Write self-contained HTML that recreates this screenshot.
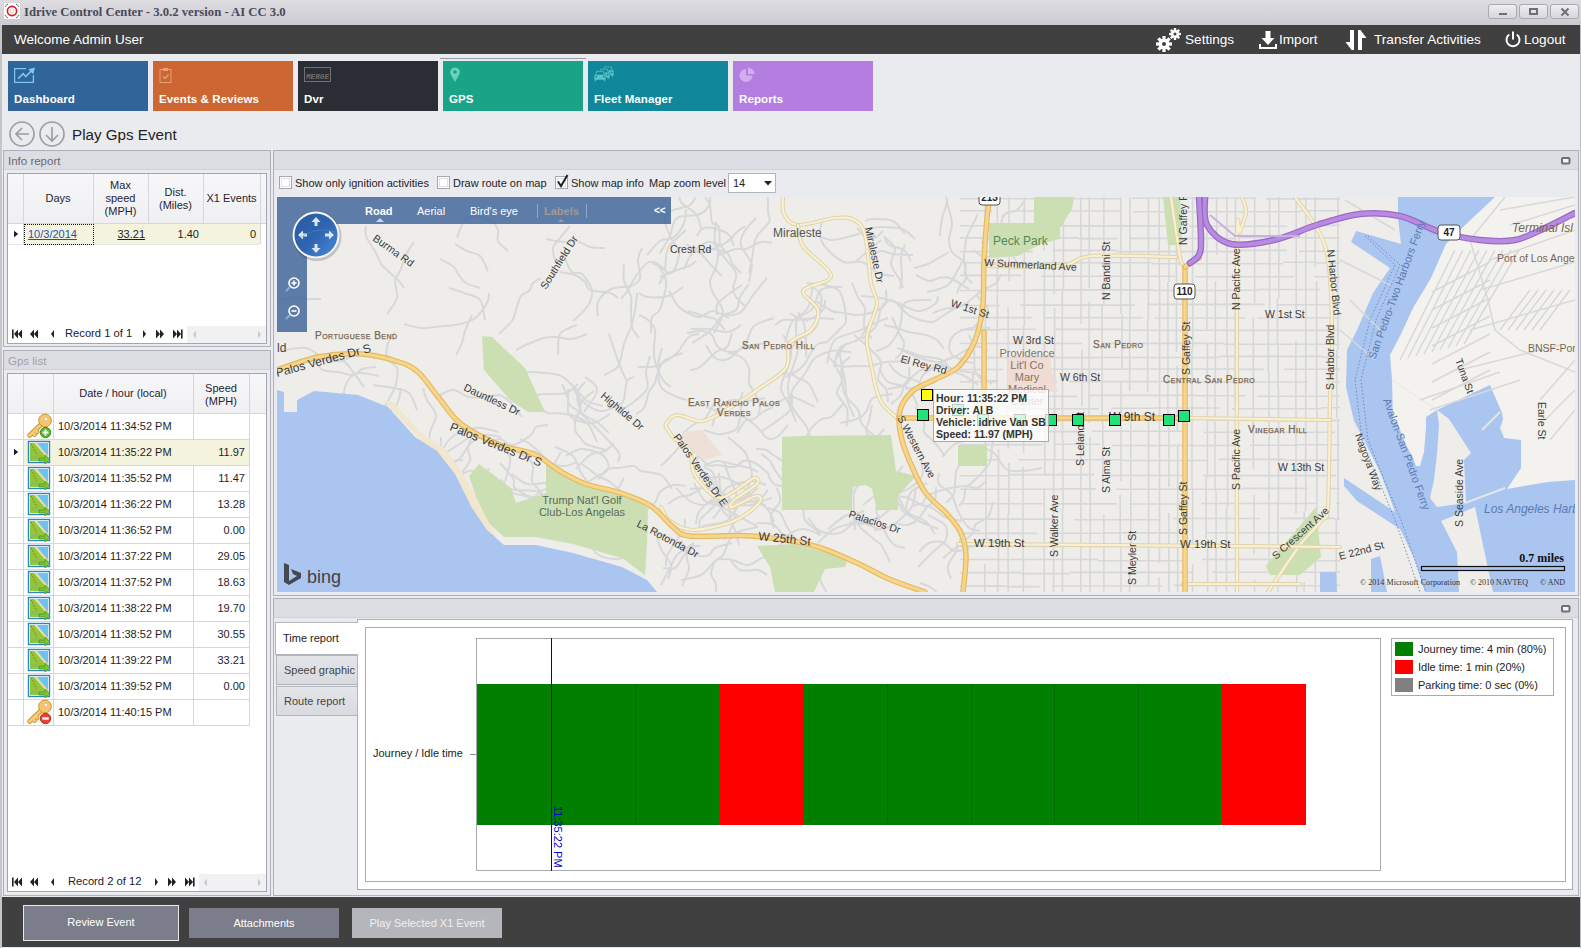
<!DOCTYPE html>
<html><head><meta charset="utf-8">
<style>
*{margin:0;padding:0;box-sizing:border-box}
html,body{width:1581px;height:948px;overflow:hidden;background:#EAEBEF;font-family:"Liberation Sans",sans-serif;position:relative}
.a{position:absolute}
.t{position:absolute;white-space:nowrap}
#title{left:0;top:0;width:1581px;height:25px;background:linear-gradient(#DCDCE1,#CBCBD1)}
#hdr{left:2px;top:25px;width:1578px;height:29px;background:#404040}
.wb{position:absolute;top:4px;width:29px;height:15px;border:1px solid #A9A9B0;border-radius:3px;background:linear-gradient(#EFEFF2,#D6D6DB)}
.tile{position:absolute;top:61px;width:140px;height:50px}
.tile .lb{position:absolute;left:6px;top:32px;font-size:11.5px;font-weight:bold;color:#fff;letter-spacing:0.1px}
.grp{position:absolute;border:1px solid #AEB0BA;background:#EAEBEF}
.gh{position:absolute;left:0;top:0;right:0;height:19px;background:#DCDDE2;border-bottom:1px solid #D0D1D6}
.gh span{position:absolute;left:4px;top:4px;font-size:11.5px;color:#6A6A70}
.grid{position:absolute;background:#fff;border:1px solid #A4A6AF}
.cell{position:absolute;font-size:11px;color:#1E1E1E;white-space:nowrap}
.hl{position:absolute;background:#D7D8DE}
.btn{position:absolute;font-size:11px;color:#fff;text-align:center;background:#7B7E8A}
</style></head><body>

<!-- title bar -->
<div id="title" class="a">
  <svg class="a" style="left:4px;top:3px" width="16" height="16" viewBox="0 0 16 16">
    <rect x="0" y="0" width="16" height="16" fill="#fff"/>
    <circle cx="8" cy="8" r="4.6" fill="none" stroke="#E0141E" stroke-width="1.6"/>
    <circle cx="8" cy="8" r="2" fill="none" stroke="#ccc" stroke-width="0.8"/>
    <path d="M1 4 A8 8 0 0 1 4 1 M12 1 A8 8 0 0 1 15 4 M15 12 A8 8 0 0 1 12 15 M4 15 A8 8 0 0 1 1 12" stroke="#666" stroke-width="1" fill="none"/>
  </svg>
  <div class="t" style="left:24px;top:5px;font-size:12.7px;font-weight:bold;color:#4A4A58;font-family:'Liberation Serif',serif;">Idrive Control Center - 3.0.2 version - AI CC 3.0</div>
  <div class="wb" style="left:1488px"><div class="a" style="left:10px;top:8px;width:8px;height:2px;background:#6E6E7A"></div></div>
  <div class="wb" style="left:1519px"><div class="a" style="left:9px;top:3px;width:9px;height:7px;border:2px solid #6E6E7A"></div></div>
  <div class="wb" style="left:1550px"><svg class="a" style="left:9px;top:2px" width="10" height="10"><path d="M1.5 1.5L8.5 8.5M8.5 1.5L1.5 8.5" stroke="#6E6E7A" stroke-width="2"/></svg></div>
</div>

<!-- window left/right border -->
<div class="a" style="left:0;top:25px;width:2px;height:923px;background:#C5C5CC"></div>
<div class="a" style="left:1580px;top:25px;width:1px;height:923px;background:#BDBDC5"></div>

<!-- header -->
<div id="hdr" class="a">
  <div class="t" style="left:12px;top:7px;font-size:13.5px;color:#fff">Welcome Admin User</div>
  <!-- settings -->
  <svg class="a" style="left:1153px;top:2px" width="28" height="26" viewBox="0 0 28 26">
    <g fill="#fff">
      <circle cx="9" cy="17" r="5.5"/>
      <g transform="translate(9 17)"><rect x="-1.6" y="-8" width="3.2" height="16"/><rect x="-1.6" y="-8" width="3.2" height="16" transform="rotate(45)"/><rect x="-1.6" y="-8" width="3.2" height="16" transform="rotate(90)"/><rect x="-1.6" y="-8" width="3.2" height="16" transform="rotate(135)"/></g>
      <circle cx="20" cy="7" r="4"/>
      <g transform="translate(20 7)"><rect x="-1.2" y="-6" width="2.4" height="12"/><rect x="-1.2" y="-6" width="2.4" height="12" transform="rotate(45)"/><rect x="-1.2" y="-6" width="2.4" height="12" transform="rotate(90)"/><rect x="-1.2" y="-6" width="2.4" height="12" transform="rotate(135)"/></g>
    </g>
    <circle cx="9" cy="17" r="2" fill="#404040"/><circle cx="20" cy="7" r="1.5" fill="#404040"/>
  </svg>
  <div class="t" style="left:1183px;top:7px;font-size:13.6px;color:#fff">Settings</div>
  <!-- import -->
  <svg class="a" style="left:1257px;top:5px" width="18" height="20" viewBox="0 0 18 20">
    <path d="M6.5 1h5v7h4l-6.5 7-6.5-7h4z" fill="#fff"/>
    <path d="M1 14v4h16v-4" stroke="#fff" stroke-width="2" fill="none"/>
  </svg>
  <div class="t" style="left:1277px;top:7px;font-size:13.6px;color:#fff">Import</div>
  <!-- transfer -->
  <svg class="a" style="left:1343px;top:4px" width="24" height="22" viewBox="0 0 24 22">
    <path d="M9 1v20h-2.5l-6-8h4.5v-12z" fill="#fff"/>
    <path d="M13 21v-20h2.5l6 8h-4.5v12z" fill="#fff"/>
  </svg>
  <div class="t" style="left:1372px;top:7px;font-size:13.6px;color:#fff">Transfer Activities</div>
  <!-- logout -->
  <svg class="a" style="left:1502px;top:6px" width="18" height="18" viewBox="0 0 18 18">
    <path d="M5.2 3.5A6.5 6.5 0 1 0 12.8 3.5" stroke="#fff" stroke-width="2" fill="none"/>
    <path d="M9 0.5v8" stroke="#fff" stroke-width="2"/>
  </svg>
  <div class="t" style="left:1522px;top:7px;font-size:13.6px;color:#fff">Logout</div>
</div>

<!-- tiles -->
<div class="tile" style="left:8px;background:#316599">
  <svg class="a" style="left:6px;top:6px" width="22" height="17" viewBox="0 0 22 17"><path d="M0.6 1.6H12M0.6 1V15.4H19.4V8" stroke="#7CC7F0" stroke-width="1.3" fill="none"/><path d="M4.2 11.6L9.2 6.6L11.7 9.6L17.2 4.1" stroke="#7CC7F0" stroke-width="1.5" fill="none"/><path d="M21 0.5L14.3 2.2L19.3 7.2Z" fill="#7CC7F0"/></svg>
  <div class="lb">Dashboard</div>
</div>
<div class="tile" style="left:153px;background:#CC6633">
  <svg class="a" style="left:6px;top:6px" width="14" height="17" viewBox="0 0 14 17"><rect x="1" y="2.5" width="11" height="13" stroke="#E8A27A" stroke-width="1" fill="none"/><rect x="4" y="1" width="5" height="3" fill="#E8A27A"/><path d="M4 9.5l2 2 3.5-4" stroke="#E8A27A" stroke-width="1.2" fill="none"/></svg>
  <div class="lb">Events &amp; Reviews</div>
</div>
<div class="tile" style="left:298px;background:#2A2D33">
  <svg class="a" style="left:6px;top:6px" width="28" height="16" viewBox="0 0 28 16"><rect x="0.5" y="0.5" width="26" height="14" fill="none" stroke="#707070" stroke-width="1"/><text x="2" y="11.5" font-size="7" font-weight="bold" font-style="italic" fill="#6E6E6E" textLength="23" lengthAdjust="spacingAndGlyphs" font-family="Liberation Mono">MERGE</text></svg>
  <div class="lb">Dvr</div>
</div>
<div class="a" style="left:440px;top:58px;width:146px;height:1px;background:#9A9AA2"></div>
<div class="tile" style="left:443px;background:#1AA386">
  <svg class="a" style="left:6px;top:6px" width="12" height="16" viewBox="0 0 12 16"><path d="M6 15L1.5 7A4.8 4.8 0 1 1 10.5 7z" fill="#6CD1BB"/><circle cx="6" cy="5" r="1.8" fill="#1AA386"/></svg>
  <div class="lb">GPS</div>
</div>
<div class="tile" style="left:588px;background:#10879B">
  <svg class="a" style="left:5px;top:5px" width="22" height="16" viewBox="0 0 22 16"><g transform="translate(9 0)"><path d="M2.3 0.3H9.7L11.2 4.6H12V9.2H11.6V10.8H9.4V9.6H2.6V10.8H0.4V9.2H0V4.6H0.8Z" fill="#5BC4C8" stroke="#10879B" stroke-width="0.6"/><path d="M3 1.3H9L10 4.3H2Z" fill="#10879B"/><circle cx="2.2" cy="6.3" r="0.9" fill="#10879B"/><circle cx="9.8" cy="6.3" r="0.9" fill="#10879B"/></g><g transform="translate(5 2.2)"><path d="M2.3 0.3H9.7L11.2 4.6H12V9.2H11.6V10.8H9.4V9.6H2.6V10.8H0.4V9.2H0V4.6H0.8Z" fill="#5BC4C8" stroke="#10879B" stroke-width="0.6"/><path d="M3 1.3H9L10 4.3H2Z" fill="#10879B"/><circle cx="2.2" cy="6.3" r="0.9" fill="#10879B"/><circle cx="9.8" cy="6.3" r="0.9" fill="#10879B"/></g><g transform="translate(1 4.4)"><path d="M2.3 0.3H9.7L11.2 4.6H12V9.2H11.6V10.8H9.4V9.6H2.6V10.8H0.4V9.2H0V4.6H0.8Z" fill="#5BC4C8" stroke="#10879B" stroke-width="0.6"/><path d="M3 1.3H9L10 4.3H2Z" fill="#10879B"/><circle cx="2.2" cy="6.3" r="0.9" fill="#10879B"/><circle cx="9.8" cy="6.3" r="0.9" fill="#10879B"/></g></svg>
  <div class="lb">Fleet Manager</div>
</div>
<div class="tile" style="left:733px;background:#B47EE0">
  <svg class="a" style="left:6px;top:6px" width="16" height="16" viewBox="0 0 16 16"><path d="M7 2A6.5 6.5 0 1 0 13.5 8.5H7z" fill="#D0AEF0"/><path d="M9 0.5V7h6.5A6.5 6.5 0 0 0 9 0.5z" fill="#D0AEF0"/></svg>
  <div class="lb">Reports</div>
</div>

<!-- nav -->
<svg class="a" style="left:8px;top:120px" width="60" height="29" viewBox="0 0 60 29">
  <circle cx="14" cy="14" r="12" stroke="#9C9C9C" stroke-width="1.6" fill="none"/>
  <path d="M8 14h13M14 8l-6 6 6 6" stroke="#9C9C9C" stroke-width="1.6" fill="none"/>
  <circle cx="44" cy="14" r="12" stroke="#9C9C9C" stroke-width="1.6" fill="none"/>
  <path d="M44 7v14M38 15l6 6 6-6" stroke="#9C9C9C" stroke-width="1.6" fill="none"/>
</svg>
<div class="t" style="left:72px;top:126px;font-size:15.2px;color:#222">Play Gps Event</div>

<!-- LEFT: info report -->
<div class="grp" style="left:3px;top:150px;width:268px;height:197px">
  <div class="gh"><span>Info report</span></div>
</div>
<div class="grid" style="left:7px;top:173px;width:260px;height:171px"></div>

<!-- LEFT: gps list -->
<div class="grp" style="left:3px;top:350px;width:268px;height:546px">
  <div class="gh"><span style="color:#A0A0A8">Gps list</span></div>
</div>
<div class="grid" style="left:7px;top:373px;width:260px;height:519px"></div>

<!-- MAP panel -->
<div class="grp" style="left:273px;top:150px;width:1306px;height:446px">
  <div class="gh"></div>
</div>

<!-- CHART panel -->
<div class="grp" style="left:273px;top:598px;width:1306px;height:298px">
  <div class="gh"></div>
</div>

<!-- bottom bar -->
<div class="a" style="left:2px;top:897px;width:1578px;height:50px;background:#404040"></div>
<div class="btn" style="left:23px;top:905px;width:156px;height:36px;border:1px solid #E8E8E8;padding-top:1px"><div class="a" style="left:2px;top:2px;right:2px;bottom:2px;background:#7B7E8A"></div><span class="a" style="left:0;right:0;top:10px">Review Event</span></div>
<div class="btn" style="left:189px;top:908px;width:150px;height:30px;line-height:30px">Attachments</div>
<div class="btn" style="left:352px;top:908px;width:150px;height:30px;line-height:30px;background:#B5B6BC;color:#F0F0F0">Play Selected X1 Event</div>

<svg width="0" height="0" style="position:absolute"><defs>
<symbol id="ikey" viewBox="0 0 30 26">
 <path d="M18.5 11L6.5 22.5M9.5 19.5l2.2 2.2M12.2 17l2 2" stroke="#C98E35" stroke-width="4.6" stroke-linecap="round" fill="none"/>
 <path d="M18.5 11L6.5 22.5M9.5 19.5l2.2 2.2M12.2 17l2 2" stroke="#F6CB74" stroke-width="3" stroke-linecap="round" fill="none"/>
 <circle cx="22" cy="7.5" r="6.4" fill="#F3C56C" stroke="#CF953F" stroke-width="1"/>
 <circle cx="23" cy="6" r="1.5" fill="#fff" stroke="#C99" stroke-width="0.4"/>
</symbol>
<symbol id="iplus" viewBox="0 0 30 26">
 <circle cx="22.5" cy="19.5" r="5.2" fill="#5CB52F" stroke="#3C8C1B" stroke-width="1"/>
 <path d="M22.5 16.5v6M19.5 19.5h6" stroke="#fff" stroke-width="2"/>
</symbol>
<symbol id="iminus" viewBox="0 0 30 26">
 <circle cx="22.5" cy="19.5" r="5.2" fill="#E5423A" stroke="#B82820" stroke-width="1"/>
 <path d="M19.3 19.5h6.4" stroke="#fff" stroke-width="2.2"/>
</symbol>
<symbol id="imap" viewBox="0 0 30 26">
 <rect x="5.5" y="2.5" width="21" height="21" fill="#fff" stroke="#2A87C6" stroke-width="1.4"/>
 <rect x="7" y="4" width="18" height="18" fill="#8BCB3A"/>
 <path d="M12 4h13v13z" fill="#6CC3F0"/>
 <path d="M11 4h3l11 13v3z" fill="#F2D9A6"/>
 <path d="M8 5l2 3 1 3 2 3 1 2" stroke="#E0402A" stroke-width="1" stroke-dasharray="1.5 1.5" fill="none"/>
 <path d="M7 21l5-4 4 3" stroke="#999" stroke-width="0.8" fill="none"/>
 <path d="M16 19h6v-3l5 4.5-5 4.5v-3h-6z" fill="#7CC232" stroke="#4F9A1C" stroke-width="0.8"/>
</symbol>
<symbol id="tri" viewBox="0 0 6 8"><path d="M0 0L5 4L0 8z" fill="#1A1A2A"/></symbol>
</defs></svg>
<div class="a" style="left:8px;top:174px;width:258px;height:49px;background:linear-gradient(#F7F7F9,#F0F0F3)"></div>
<div class="a" style="left:23px;top:174px;width:1px;height:70px;background:#D6D7DD"></div>
<div class="a" style="left:93px;top:174px;width:1px;height:70px;background:#D6D7DD"></div>
<div class="a" style="left:148px;top:174px;width:1px;height:70px;background:#D6D7DD"></div>
<div class="a" style="left:203px;top:174px;width:1px;height:70px;background:#D6D7DD"></div>
<div class="a" style="left:260px;top:174px;width:1px;height:70px;background:#D6D7DD"></div>
<div class="a" style="left:8px;top:223px;width:258px;height:1px;background:#D6D7DD"></div>
<div class="a" style="left:24px;top:224px;width:236px;height:20px;background:#F4F3DD"></div>
<div class="a" style="left:8px;top:244px;width:252px;height:1px;background:#E4E5EA"></div>
<div class="a" style="left:24px;top:224px;width:70px;height:21px;border:1px dotted #111"></div>
<svg class="a" style="left:14px;top:230px" width="5" height="8"><use href="#tri"/></svg>
<div class="cell" style="left:23px;top:192px;width:70px;text-align:center;line-height:12.8px;color:#252530">Days</div>
<div class="cell" style="left:93px;top:179px;width:55px;text-align:center;line-height:12.8px;color:#252530">Max<br>speed<br>(MPH)</div>
<div class="cell" style="left:148px;top:186px;width:55px;text-align:center;line-height:12.8px;color:#252530">Dist.<br>(Miles)</div>
<div class="cell" style="left:203px;top:192px;width:57px;text-align:center;line-height:12.8px;color:#252530">X1 Events</div>
<div class="cell" style="left:28px;top:228px;color:#1F4FB8;text-decoration:underline">10/3/2014</div>
<div class="cell" style="left:93px;top:228px;width:52px;text-align:right;text-decoration:underline">33.21</div>
<div class="cell" style="left:148px;top:228px;width:51px;text-align:right">1.40</div>
<div class="cell" style="left:203px;top:228px;width:53px;text-align:right">0</div>
<svg class="a" style="left:12px;top:329px" width="190" height="10" viewBox="0 0 190 10"><rect x="0" y="0.5" width="1.6" height="9" fill="#222"/><path d="M6 0.5L2 5L6 9.5zM10 0.5L6 5L10 9.5z" fill="#222"/><path d="M22 0.5L18 5L22 9.5zM26 0.5L22 5L26 9.5z" fill="#222"/><path d="M42 1L39 5L42 9z" fill="#222"/><path d="M131.0 1L134 5L131 9z" fill="#222"/><path d="M144 0.5L148 5L144 9.5zM148 0.5L152 5L148 9.5z" fill="#222"/><path d="M161 0.5L165 5L161 9.5zM165 0.5L169 5L165 9.5z" fill="#222"/><rect x="169" y="0.5" width="1.6" height="9" fill="#222"/></svg>
<div class="cell" style="left:65px;top:327px;font-size:11.2px;color:#202030">Record 1 of 1</div>
<div class="a" style="left:187px;top:326px;width:79px;height:17px;background:#F1F1F3"></div>
<svg class="a" style="left:192px;top:330px" width="72" height="9"><path d="M4 0.5L1 4.5L4 8.5z" fill="#C8C8CE"/><path d="M66 0.5L69 4.5L66 8.5z" fill="#C8C8CE"/></svg>
<div class="a" style="left:8px;top:374px;width:258px;height:40px;background:linear-gradient(#F7F7F9,#F0F0F3)"></div>
<div class="a" style="left:23px;top:374px;width:1px;height:352px;background:#D6D7DD"></div>
<div class="a" style="left:53px;top:374px;width:1px;height:352px;background:#D6D7DD"></div>
<div class="a" style="left:193px;top:374px;width:1px;height:352px;background:#D6D7DD"></div>
<div class="a" style="left:249px;top:374px;width:1px;height:352px;background:#D6D7DD"></div>
<div class="a" style="left:8px;top:413px;width:258px;height:1px;background:#D6D7DD"></div>
<div class="cell" style="left:53px;top:387px;width:140px;text-align:center;line-height:12.8px;color:#252530">Date / hour (local)</div>
<div class="cell" style="left:193px;top:382px;width:56px;text-align:center;line-height:12.8px;color:#252530">Speed<br>(MPH)</div>
<div class="a" style="left:8px;top:439px;width:242px;height:1px;background:#D6D7DD"></div>
<svg class="a" style="left:23px;top:413px" width="30" height="26"><use href="#ikey"/><use href="#iplus"/></svg>
<div class="cell" style="left:58px;top:420px;">10/3/2014 11:34:52 PM</div>
<div class="a" style="left:24px;top:440px;width:225px;height:25px;background:#F4F3DD"></div>
<svg class="a" style="left:14px;top:448px" width="5" height="8"><use href="#tri"/></svg>
<div class="a" style="left:8px;top:465px;width:242px;height:1px;background:#D6D7DD"></div>
<svg class="a" style="left:23px;top:439px" width="30" height="26"><use href="#imap"/></svg>
<div class="cell" style="left:58px;top:446px;">10/3/2014 11:35:22 PM</div>
<div class="cell" style="left:193px;top:446px;width:52px;text-align:right">11.97</div>
<div class="a" style="left:8px;top:491px;width:242px;height:1px;background:#D6D7DD"></div>
<svg class="a" style="left:23px;top:465px" width="30" height="26"><use href="#imap"/></svg>
<div class="cell" style="left:58px;top:472px;">10/3/2014 11:35:52 PM</div>
<div class="cell" style="left:193px;top:472px;width:52px;text-align:right">11.47</div>
<div class="a" style="left:8px;top:517px;width:242px;height:1px;background:#D6D7DD"></div>
<svg class="a" style="left:23px;top:491px" width="30" height="26"><use href="#imap"/></svg>
<div class="cell" style="left:58px;top:498px;">10/3/2014 11:36:22 PM</div>
<div class="cell" style="left:193px;top:498px;width:52px;text-align:right">13.28</div>
<div class="a" style="left:8px;top:543px;width:242px;height:1px;background:#D6D7DD"></div>
<svg class="a" style="left:23px;top:517px" width="30" height="26"><use href="#imap"/></svg>
<div class="cell" style="left:58px;top:524px;">10/3/2014 11:36:52 PM</div>
<div class="cell" style="left:193px;top:524px;width:52px;text-align:right">0.00</div>
<div class="a" style="left:8px;top:569px;width:242px;height:1px;background:#D6D7DD"></div>
<svg class="a" style="left:23px;top:543px" width="30" height="26"><use href="#imap"/></svg>
<div class="cell" style="left:58px;top:550px;">10/3/2014 11:37:22 PM</div>
<div class="cell" style="left:193px;top:550px;width:52px;text-align:right">29.05</div>
<div class="a" style="left:8px;top:595px;width:242px;height:1px;background:#D6D7DD"></div>
<svg class="a" style="left:23px;top:569px" width="30" height="26"><use href="#imap"/></svg>
<div class="cell" style="left:58px;top:576px;">10/3/2014 11:37:52 PM</div>
<div class="cell" style="left:193px;top:576px;width:52px;text-align:right">18.63</div>
<div class="a" style="left:8px;top:621px;width:242px;height:1px;background:#D6D7DD"></div>
<svg class="a" style="left:23px;top:595px" width="30" height="26"><use href="#imap"/></svg>
<div class="cell" style="left:58px;top:602px;">10/3/2014 11:38:22 PM</div>
<div class="cell" style="left:193px;top:602px;width:52px;text-align:right">19.70</div>
<div class="a" style="left:8px;top:647px;width:242px;height:1px;background:#D6D7DD"></div>
<svg class="a" style="left:23px;top:621px" width="30" height="26"><use href="#imap"/></svg>
<div class="cell" style="left:58px;top:628px;">10/3/2014 11:38:52 PM</div>
<div class="cell" style="left:193px;top:628px;width:52px;text-align:right">30.55</div>
<div class="a" style="left:8px;top:673px;width:242px;height:1px;background:#D6D7DD"></div>
<svg class="a" style="left:23px;top:647px" width="30" height="26"><use href="#imap"/></svg>
<div class="cell" style="left:58px;top:654px;">10/3/2014 11:39:22 PM</div>
<div class="cell" style="left:193px;top:654px;width:52px;text-align:right">33.21</div>
<div class="a" style="left:8px;top:699px;width:242px;height:1px;background:#D6D7DD"></div>
<svg class="a" style="left:23px;top:673px" width="30" height="26"><use href="#imap"/></svg>
<div class="cell" style="left:58px;top:680px;">10/3/2014 11:39:52 PM</div>
<div class="cell" style="left:193px;top:680px;width:52px;text-align:right">0.00</div>
<div class="a" style="left:8px;top:725px;width:242px;height:1px;background:#D6D7DD"></div>
<svg class="a" style="left:23px;top:699px" width="30" height="26"><use href="#ikey"/><use href="#iminus"/></svg>
<div class="cell" style="left:58px;top:706px;">10/3/2014 11:40:15 PM</div>
<svg class="a" style="left:12px;top:877px" width="190" height="10" viewBox="0 0 190 10"><rect x="0" y="0.5" width="1.6" height="9" fill="#222"/><path d="M6 0.5L2 5L6 9.5zM10 0.5L6 5L10 9.5z" fill="#222"/><path d="M22 0.5L18 5L22 9.5zM26 0.5L22 5L26 9.5z" fill="#222"/><path d="M42 1L39 5L42 9z" fill="#222"/><path d="M143.0 1L146 5L143 9z" fill="#222"/><path d="M156 0.5L160 5L156 9.5zM160 0.5L164 5L160 9.5z" fill="#222"/><path d="M173 0.5L177 5L173 9.5zM177 0.5L181 5L177 9.5z" fill="#222"/><rect x="181" y="0.5" width="1.6" height="9" fill="#222"/></svg>
<div class="cell" style="left:68px;top:875px;font-size:11.2px;color:#202030">Record 2 of 12</div>
<div class="a" style="left:199px;top:874px;width:67px;height:17px;background:#F1F1F3"></div>
<svg class="a" style="left:203px;top:878px" width="60" height="9"><path d="M4 0.5L1 4.5L4 8.5z" fill="#C8C8CE"/><path d="M55 0.5L58 4.5L55 8.5z" fill="#C8C8CE"/></svg><svg class="a" style="left:1561px;top:157px" width="10" height="8"><rect x="1" y="1" width="7.5" height="5.5" rx="1" fill="#F4F4F6" stroke="#6E6E78" stroke-width="2"/></svg>
<div class="a" style="left:279px;top:176px;width:13px;height:13px;border:1px solid #A8A8B0;background:#fff"><div class="a" style="left:1px;top:1px;width:9px;height:9px;border:1px solid #E2E2E6"></div></div>
<div class="a" style="left:437px;top:176px;width:13px;height:13px;border:1px solid #A8A8B0;background:#fff"><div class="a" style="left:1px;top:1px;width:9px;height:9px;border:1px solid #E2E2E6"></div></div>
<div class="a" style="left:555px;top:176px;width:13px;height:13px;border:1px solid #A8A8B0;background:#fff"><div class="a" style="left:1px;top:1px;width:9px;height:9px;border:1px solid #E2E2E6"></div></div>
<svg class="a" style="left:556px;top:174px" width="13" height="14"><path d="M2 7.5l3 4.5L11.5 1" stroke="#222" stroke-width="2" fill="none"/></svg>
<div class="t" style="left:295px;top:177px;font-size:11px;color:#1E1E2A">Show only ignition activities</div>
<div class="t" style="left:453px;top:177px;font-size:11px;color:#1E1E2A">Draw route on map</div>
<div class="t" style="left:571px;top:177px;font-size:11px;color:#1E1E2A">Show map info</div>
<div class="t" style="left:649px;top:177px;font-size:11px;color:#1E1E2A">Map zoom level</div>
<div class="a" style="left:728px;top:173px;width:48px;height:20px;border:1px solid #B4B4BC;background:#fff"><span class="t" style="left:4px;top:3px;font-size:11px;color:#1E1E2A">14</span><svg class="a" style="left:35px;top:7px" width="8" height="5"><path d="M0 0h8L4 4.5z" fill="#222"/></svg></div>
<svg class="a" style="left:277px;top:197px" width="1298" height="395" viewBox="277 197 1298 395">
<rect x="277" y="197" width="1298" height="395" fill="#EEEDE9"/>
<path d="M985.1 197V310 M985.5 310V462 M986.0 462V538 M984.8 564V619 M997.3 197V333 M997.1 333V435 M998.5 449V574 M997.7 574V687 M1009.0 197V281 M1008.1 307V449 M1008.9 463V514 M1008.1 514V639 M1024.3 197V326 M1023.6 326V453 M1023.0 467V556 M1023.3 556V655 M1044.1 197V251 M1044.3 265V403 M1044.8 403V474 M1044.2 488V639 M1054.1 197V294 M1054.6 308V461 M1053.6 461V611 M1063.4 197V290 M1062.3 290V378 M1062.5 378V440 M1063.0 440V509 M1062.5 509V624 M1080.8 197V237 M1081.1 237V324 M1081.9 350V406 M1080.9 432V555 M1080.8 555V706 M1089.2 197V288 M1089.1 302V423 M1089.9 437V485 M1090.2 485V539 M1090.1 539V592 M1103.9 197V305 M1102.1 305V423 M1102.8 423V489 M1103.9 515V636 M1120.9 197V314 M1122.0 314V368 M1121.0 382V481 M1120.2 495V545 M1121.0 545V628 M1130.0 197V325 M1129.7 325V391 M1130.8 417V545 M1129.6 571V708 M1148.4 197V319 M1147.7 319V392 M1148.5 418V479 M1148.6 479V587 M1159.2 197V279 M1159.6 279V419 M1159.5 419V563 M1159.0 577V646 M1169.0 197V282 M1167.9 282V423 M1168.9 423V487 M1168.9 513V610 M1176.4 197V283 M1176.4 283V352 M1177.2 366V432 M1177.7 446V601 M1192.6 197V298 M1192.8 298V348 M1192.0 348V488 M1192.6 488V550 M1192.6 564V646 M1206.9 197V329 M1207.4 343V478 M1206.1 478V539 M1207.6 539V654 M1216.7 197V255 M1215.3 281V381 M1215.0 381V491 M1216.1 491V633 M1226.9 197V356 M1227.7 356V507 M1226.5 507V574 M1226.5 574V651 M1235.5 197V312 M1235.1 312V405 M1236.8 405V539 M1236.6 539V663 M1254.7 197V303 M1253.3 317V469 M1254.0 495V554 M1254.6 580V731 M1269.6 197V314 M1268.3 314V373 M1269.1 373V492 M1269.1 492V573 M1278.8 197V298 M1277.4 298V345 M1278.0 345V390 M1278.5 390V501 M1277.9 501V657 M1296.2 197V315 M1295.9 341V406 M1296.0 406V514 M1296.8 528V599 M1305.8 197V357 M1305.7 357V511 M1304.2 511V568 M1304.1 582V678 M1315.1 197V267 M1316.6 281V406 M1316.9 406V560 M1315.3 560V682 M1337.9 197V350 M1336.8 350V418 M1338.0 418V520 M1336.3 520V666 M960 198.8H1045 M1065 198.7H1120 M1132 198.3H1254 M1266 198.9H1340 M960 210.8H992 M1012 211.0H1121 M1133 211.7H1171 M1171 211.7H1301 M1301 210.7H1340 M960 225.7H995 M995 226.5H1041 M1061 225.9H1177 M1189 226.3H1287 M1307 225.4H1340 M960 237.9H1078 M1078 238.6H1117 M1129 238.4H1240 M1240 237.4H1280 M1280 237.9H1340 M960 251.6H1033 M1053 250.4H1117 M1117 251.6H1237 M1237 250.4H1287 M1299 251.2H1340 M960 262.7H1057 M1057 262.7H1151 M1151 263.7H1283 M1283 262.3H1317 M1317 263.0H1340 M960 275.4H1021 M1041 276.2H1175 M1195 276.7H1294 M1314 276.7H1340 M960 290.5H1033 M1033 289.9H1153 M1153 290.5H1227 M1227 290.2H1258 M1258 289.5H1320 M960 305.5H1000 M1020 305.1H1135 M1147 304.4H1265 M1277 304.7H1330 M1330 304.8H1340 M960 317.6H1032 M1044 317.8H1113 M1113 317.8H1143 M1155 318.0H1245 M1257 318.0H1312 M1312 317.7H1340 M960 329.9H1001 M1001 329.3H1036 M1056 329.4H1124 M1124 330.2H1221 M1221 330.4H1340 M960 343.5H1082 M1102 343.4H1224 M1224 344.3H1340 M960 357.6H1093 M1093 357.5H1219 M1219 356.4H1323 M1323 357.2H1340 M960 369.5H1003 M1023 369.2H1124 M1124 369.0H1234 M1234 369.4H1264 M1284 369.2H1340 M960 381.7H998 M1018 381.6H1057 M1069 381.6H1195 M1195 382.0H1308 M1328 382.0H1340 M960 396.4H1077 M1089 395.4H1197 M1197 395.7H1245 M1257 396.2H1340 M960 408.0H1007 M1007 408.7H1099 M1111 408.2H1153 M1153 408.0H1220 M1232 408.7H1321 M1321 407.7H1340 M960 419.3H1000 M1020 420.4H1108 M1108 419.8H1195 M1207 420.1H1263 M1263 420.6H1311 M1323 420.5H1340 M960 431.6H1080 M1092 431.3H1184 M1204 432.3H1234 M1254 432.3H1335 M960 444.8H1043 M1055 444.3H1100 M1112 445.5H1238 M1250 445.3H1295 M1295 444.7H1340 M960 459.8H998 M1018 459.8H1123 M1123 460.5H1207 M1219 459.4H1284 M1284 460.2H1340 M960 475.7H1009 M1009 474.6H1094 M1106 475.5H1183 M1203 475.6H1336 M960 489.3H1060 M1060 488.9H1096 M1116 489.2H1242 M1242 488.4H1308 M1328 488.5H1340 M960 503.7H1043 M1055 503.9H1117 M1129 504.0H1189 M1201 503.5H1316 M1336 503.4H1340 M960 519.1H1054 M1074 519.7H1161 M1173 518.5H1260 M1280 518.4H1334 M1334 518.7H1340 M960 533.4H1037 M1049 533.3H1104 M1104 532.9H1186 M1206 532.8H1303 M1303 533.0H1340 M960 546.5H1063 M1075 546.4H1169 M1169 546.9H1230 M1250 547.6H1337 M960 559.5H1098 M1098 560.7H1182 M1202 559.4H1294 M1294 560.7H1340 M960 572.6H1021 M1021 573.6H1070 M1070 572.4H1192 M1212 572.3H1340 M960 586.1H1006 M1006 586.6H1040 M1052 586.0H1162 M1174 585.4H1259 M1259 585.8H1327 M1327 585.3H1340" stroke="#D7D7D9" stroke-width="1.6" fill="none"/>
<path d="M690 370 C691.7 369.5 695.7 370.0 700 367 C704.3 364.0 711.5 355.3 716 352 C720.5 348.7 724.3 350.2 727 347 C729.7 343.8 731.2 335.3 732 333 M850 357 C848.7 358.3 843.3 361.5 842 365 C840.7 368.5 841.5 373.0 842 378 C842.5 383.0 842.3 389.7 845 395 C847.7 400.3 855.2 405.2 858 410 C860.8 414.8 858.7 419.2 862 424 C865.3 428.8 875.3 436.5 878 439 M694 483 C695.8 486.0 700.7 497.2 705 501 C709.3 504.8 714.5 503.5 720 506 C725.5 508.5 731.8 512.7 738 516 C744.2 519.3 753.8 524.3 757 526 M584 412 C586.0 409.0 594.2 398.5 596 394 C597.8 389.5 596.8 387.8 595 385 C593.2 382.2 586.7 378.3 585 377 M946 503 C947.3 501.3 952.3 498.2 954 493 C955.7 487.8 955.0 476.7 956 472 C957.0 467.3 959.3 466.2 960 465 M846 344 C845.0 345.3 840.8 349.2 840 352 C839.2 354.8 840.2 356.2 841 361 C841.8 365.8 844.0 374.7 845 381 C846.0 387.3 845.5 393.0 847 399 C848.5 405.0 852.8 414.0 854 417 M693 478 C695.5 478.0 703.3 478.2 708 478 C712.7 477.8 716.5 476.3 721 477 C725.5 477.7 731.2 480.2 735 482 C738.8 483.8 740.8 485.3 744 488 C747.2 490.7 750.3 495.0 754 498 C757.7 501.0 764.0 504.7 766 506 M905 245 C904.3 246.8 901.5 250.5 901 256 C900.5 261.5 902.2 272.5 902 278 C901.8 283.5 900.3 287.2 900 289 M868 325 C866.5 327.3 863.7 335.2 859 339 C854.3 342.8 844.2 343.3 840 348 C835.8 352.7 835.0 363.8 834 367 M606 450 C602.7 449.0 590.3 446.2 586 444 C581.7 441.8 581.8 439.3 580 437 C578.2 434.7 575.7 433.2 575 430 C574.3 426.8 575.2 421.5 576 418 C576.8 414.5 579.7 413.8 580 409 C580.3 404.2 578.3 392.3 578 389 M758 472 C756.5 471.3 753.3 469.3 749 468 C744.7 466.7 737.3 465.2 732 464 C726.7 462.8 721.7 460.7 717 461 C712.3 461.3 706.2 465.2 704 466 M605 248 C602.5 247.8 594.7 248.2 590 247 C585.3 245.8 581.3 241.8 577 241 C572.7 240.2 569.2 242.3 564 242 C558.8 241.7 549.0 239.5 546 239 M882 492 C881.8 490.0 882.0 483.8 881 480 C880.0 476.2 878.3 472.0 876 469 C873.7 466.0 868.5 463.2 867 462 M749 284 C747.5 286.2 742.2 292.7 740 297 C737.8 301.3 739.0 306.8 736 310 C733.0 313.2 726.3 312.5 722 316 C717.7 319.5 715.0 326.5 710 331 C705.0 335.5 695.0 341.0 692 343 M604 375 C605.3 374.3 609.5 372.7 612 371 C614.5 369.3 617.0 369.5 619 365 C621.0 360.5 621.8 350.8 624 344 C626.2 337.2 630.0 330.7 632 324 C634.0 317.3 635.2 309.2 636 304 C636.8 298.8 636.8 294.8 637 293 M894 523 C896.2 523.3 903.2 525.5 907 525 C910.8 524.5 913.7 523.0 917 520 C920.3 517.0 924.0 510.3 927 507 C930.0 503.7 933.5 503.3 935 500 C936.5 496.7 935.8 489.2 936 487 M852 283 C853.0 285.3 855.8 292.7 858 297 C860.2 301.3 864.0 304.2 865 309 C866.0 313.8 862.8 321.0 864 326 C865.2 331.0 870.7 336.8 872 339 M841 350 C840.0 352.2 834.8 358.0 835 363 C835.2 368.0 841.7 375.0 842 380 C842.3 385.0 836.2 388.2 837 393 C837.8 397.8 845.3 403.5 847 409 C848.7 414.5 847.0 423.2 847 426 M728 353 C730.2 353.7 737.5 354.5 741 357 C744.5 359.5 747.7 363.7 749 368 C750.3 372.3 748.3 379.3 749 383 C749.7 386.7 751.2 386.3 753 390 C754.8 393.7 759.2 401.0 760 405 C760.8 409.0 758.3 412.5 758 414 M828 342 C826.3 342.3 820.7 342.5 818 344 C815.3 345.5 814.7 347.2 812 351 C809.3 354.8 806.3 362.7 802 367 C797.7 371.3 788.7 375.3 786 377 M690 489 C692.7 488.8 701.8 488.0 706 488 C710.2 488.0 711.0 487.2 715 489 C719.0 490.8 726.7 494.7 730 499 C733.3 503.3 735.0 509.7 735 515 C735.0 520.3 731.8 526.8 730 531 C728.2 535.2 725.0 538.5 724 540 M763 403 C764.7 403.2 768.5 405.0 773 404 C777.5 403.0 785.8 397.8 790 397 C794.2 396.2 793.8 397.3 798 399 C802.2 400.7 812.2 405.7 815 407 M576 489 C578.0 491.0 584.0 497.8 588 501 C592.0 504.2 596.2 505.5 600 508 C603.8 510.5 607.7 512.8 611 516 C614.3 519.2 617.5 524.2 620 527 C622.5 529.8 623.7 529.8 626 533 C628.3 536.2 632.7 543.8 634 546 M661 466 C663.3 463.7 671.8 455.5 675 452 C678.2 448.5 678.3 448.3 680 445 C681.7 441.7 682.3 435.7 685 432 C687.7 428.3 692.8 425.0 696 423 C699.2 421.0 700.8 423.5 704 420 C707.2 416.5 713.2 405.0 715 402 M695 452 C697.2 454.2 704.3 462.8 708 465 C711.7 467.2 712.5 464.7 717 465 C721.5 465.3 730.7 467.7 735 467 C739.3 466.3 739.7 461.7 743 461 C746.3 460.3 750.5 460.7 755 463 C759.5 465.3 767.5 473.0 770 475 M855 452 C855.0 454.0 854.2 459.3 855 464 C855.8 468.7 860.2 475.2 860 480 C859.8 484.8 855.0 487.3 854 493 C853.0 498.7 853.8 507.8 854 514 C854.2 520.2 854.8 527.3 855 530 M825 300 C824.7 301.7 825.8 306.7 823 310 C820.2 313.3 812.2 318.7 808 320 C803.8 321.3 801.0 319.2 798 318 C795.0 316.8 791.3 313.8 790 313 M788 425 C786.2 427.0 780.5 434.8 777 437 C773.5 439.2 770.5 439.8 767 438 C763.5 436.2 760.5 429.8 756 426 C751.5 422.2 746.3 417.5 740 415 C733.7 412.5 723.7 412.3 718 411 C712.3 409.7 708.0 407.7 706 407 M889 364 C890.8 365.8 894.8 371.8 900 375 C905.2 378.2 915.0 378.7 920 383 C925.0 387.3 928.3 398.0 930 401 M945 456 C943.3 453.8 938.5 447.0 935 443 C931.5 439.0 925.8 435.5 924 432 C922.2 428.5 925.5 426.2 924 422 C922.5 417.8 916.5 409.5 915 407 M570 226 C568.3 228.0 562.8 234.3 560 238 C557.2 241.7 553.8 244.2 553 248 C552.2 251.8 554.7 258.8 555 261 M916 275 C918.2 276.0 925.2 280.5 929 281 C932.8 281.5 935.5 278.5 939 278 C942.5 277.5 945.0 276.2 950 278 C955.0 279.8 965.8 287.2 969 289 M584 484 C586.3 482.7 594.2 478.2 598 476 C601.8 473.8 605.3 473.2 607 471 C608.7 468.8 609.0 465.8 608 463 C607.0 460.2 605.5 456.3 601 454 C596.5 451.7 586.8 448.7 581 449 C575.2 449.3 568.5 454.8 566 456 M842 287 C840.3 287.0 835.7 286.3 832 287 C828.3 287.7 823.3 287.3 820 291 C816.7 294.7 815.8 304.2 812 309 C808.2 313.8 799.7 314.8 797 320 C794.3 325.2 797.3 334.5 796 340 C794.7 345.5 790.2 350.8 789 353 M879 368 C880.5 370.3 883.2 378.7 888 382 C892.8 385.3 903.0 383.8 908 388 C913.0 392.2 916.3 403.8 918 407 M673 242 C671.7 238.7 665.3 227.2 665 222 C664.7 216.8 666.8 213.8 671 211 C675.2 208.2 685.7 208.3 690 205 C694.3 201.7 696.2 196.7 697 191 C697.8 185.3 694.5 176.0 695 171 C695.5 166.0 699.2 162.7 700 161 M628 513 C629.3 514.5 634.8 517.7 636 522 C637.2 526.3 636.3 533.5 635 539 C633.7 544.5 631.5 551.7 628 555 C624.5 558.3 619.2 559.2 614 559 C608.8 558.8 601.2 556.8 597 554 C592.8 551.2 590.3 544.0 589 542 M872 405 C871.5 407.7 870.0 416.7 869 421 C868.0 425.3 865.7 428.0 866 431 C866.3 434.0 869.7 436.2 871 439 C872.3 441.8 873.5 446.5 874 448 M980 446 C982.5 447.3 990.7 450.2 995 454 C999.3 457.8 1001.5 466.2 1006 469 C1010.5 471.8 1016.0 471.2 1022 471 C1028.0 470.8 1038.7 468.5 1042 468 M912 506 C913.8 505.5 920.5 504.7 923 503 C925.5 501.3 923.2 498.3 927 496 C930.8 493.7 939.7 490.7 946 489 C952.3 487.3 959.8 486.2 965 486 C970.2 485.8 973.7 488.7 977 488 C980.3 487.3 983.7 483.0 985 482 M886 290 C886.0 292.0 887.0 298.8 886 302 C885.0 305.2 884.3 306.8 880 309 C875.7 311.2 866.0 314.3 860 315 C854.0 315.7 848.7 313.7 844 313 C839.3 312.3 836.7 313.0 832 311 C827.3 309.0 818.7 302.7 816 301 M573 388 C574.5 390.2 577.5 397.2 582 401 C586.5 404.8 593.8 410.3 600 411 C606.2 411.7 615.0 407.0 619 405 C623.0 403.0 622.7 403.0 624 399 C625.3 395.0 625.3 384.7 627 381 C628.7 377.3 632.8 377.7 634 377 M771 380 C773.5 378.8 781.2 373.2 786 373 C790.8 372.8 796.2 377.2 800 379 C803.8 380.8 806.0 380.2 809 384 C812.0 387.8 816.5 399.0 818 402 M660 277 C663.3 275.7 675.2 270.8 680 269 C684.8 267.2 686.3 267.3 689 266 C691.7 264.7 694.8 261.8 696 261 M959 506 C959.8 504.8 962.8 502.0 964 499 C965.2 496.0 963.8 491.5 966 488 C968.2 484.5 973.0 482.3 977 478 C981.0 473.7 987.5 467.2 990 462 C992.5 456.8 991.0 452.5 992 447 C993.0 441.5 995.3 432.0 996 429 M884 429 C881.8 431.7 874.5 440.2 871 445 C867.5 449.8 865.0 453.5 863 458 C861.0 462.5 860.7 468.0 859 472 C857.3 476.0 854.2 478.3 853 482 C851.8 485.7 852.2 492.0 852 494 M836 444 C833.2 445.0 823.3 449.5 819 450 C814.7 450.5 813.3 447.0 810 447 C806.7 447.0 803.0 448.0 799 450 C795.0 452.0 788.8 455.5 786 459 C783.2 462.5 782.7 469.0 782 471 M641 532 C639.2 529.8 633.5 521.5 630 519 C626.5 516.5 623.5 516.7 620 517 C616.5 517.3 610.8 520.3 609 521 M688 311 C691.2 312.0 702.5 315.7 707 317 C711.5 318.3 712.0 316.8 715 319 C718.0 321.2 723.3 328.2 725 330 M656 534 C656.8 536.5 658.5 543.8 661 549 C663.5 554.2 669.8 560.0 671 565 C672.2 570.0 668.5 576.7 668 579 M807 461 C804.2 461.5 795.3 464.8 790 464 C784.7 463.2 779.0 458.3 775 456 C771.0 453.7 769.2 451.2 766 450 C762.8 448.8 757.7 449.2 756 449 M746 307 C744.3 305.3 738.2 300.2 736 297 C733.8 293.8 733.0 292.0 733 288 C733.0 284.0 737.5 278.2 736 273 C734.5 267.8 727.5 262.0 724 257 C720.5 252.0 716.3 248.8 715 243 C713.7 237.2 715.8 225.5 716 222 M701 228 C700.2 225.7 699.3 218.3 696 214 C692.7 209.7 683.8 206.5 681 202 C678.2 197.5 679.3 189.5 679 187 M603 406 C600.3 405.2 591.3 403.7 587 401 C582.7 398.3 581.3 394.2 577 390 C572.7 385.8 566.5 378.8 561 376 C555.5 373.2 550.0 373.5 544 373 C538.0 372.5 531.0 370.8 525 373 C519.0 375.2 510.8 383.8 508 386 M713 243 C713.8 244.2 717.5 246.0 718 250 C718.5 254.0 717.3 261.8 716 267 C714.7 272.2 710.5 276.7 710 281 C709.5 285.3 710.8 287.8 713 293 C715.2 298.2 722.8 305.3 723 312 C723.2 318.7 715.5 329.5 714 333 M973 371 C973.0 373.7 973.0 381.7 973 387 C973.0 392.3 971.2 397.2 973 403 C974.8 408.8 982.2 418.8 984 422 M712 426 C712.7 424.2 714.5 418.3 716 415 C717.5 411.7 718.3 408.5 721 406 C723.7 403.5 728.2 400.8 732 400 C735.8 399.2 740.2 401.0 744 401 C747.8 401.0 751.5 400.5 755 400 C758.5 399.5 763.3 398.3 765 398 M561 452 C560.0 453.8 557.2 458.5 555 463 C552.8 467.5 548.2 473.2 548 479 C547.8 484.8 551.3 493.5 554 498 C556.7 502.5 562.3 504.7 564 506 M726 252 C725.0 250.7 721.2 248.2 720 244 C718.8 239.8 720.3 230.7 719 227 C717.7 223.3 713.5 225.7 712 222 C710.5 218.3 711.2 209.2 710 205 C708.8 200.8 705.8 198.3 705 197 M621 299 C622.2 297.5 625.5 293.8 628 290 C630.5 286.2 632.8 280.5 636 276 C639.2 271.5 643.7 265.2 647 263 C650.3 260.8 652.5 261.3 656 263 C659.5 264.7 666.0 271.3 668 273 M834 319 C830.8 318.8 821.5 317.8 815 318 C808.5 318.2 800.3 319.7 795 320 C789.7 320.3 786.3 319.2 783 320 C779.7 320.8 776.3 324.2 775 325 M772 243 C770.2 242.8 765.3 241.0 761 242 C756.7 243.0 750.2 247.8 746 249 C741.8 250.2 740.5 248.0 736 249 C731.5 250.0 721.8 254.0 719 255 M774 318 C770.7 319.3 758.5 322.2 754 326 C749.5 329.8 749.2 337.3 747 341 C744.8 344.7 744.2 345.0 741 348 C737.8 351.0 732.3 357.3 728 359 C723.7 360.7 718.7 360.3 715 358 C711.3 355.7 707.5 347.2 706 345 M768 508 C770.0 508.8 777.0 510.2 780 513 C783.0 515.8 783.7 520.8 786 525 C788.3 529.2 792.7 534.0 794 538 C795.3 542.0 793.7 544.8 794 549 C794.3 553.2 795.3 557.5 796 563 C796.7 568.5 797.7 578.8 798 582 M686 486 C683.8 485.8 677.3 484.0 673 485 C668.7 486.0 662.8 489.3 660 492 C657.2 494.7 657.8 498.3 656 501 C654.2 503.7 651.8 506.8 649 508 C646.2 509.2 640.7 508.0 639 508 M988 351 C986.8 350.3 983.7 347.7 981 347 C978.3 346.3 976.5 345.3 972 347 C967.5 348.7 959.7 354.5 954 357 C948.3 359.5 944.2 362.0 938 362 C931.8 362.0 923.0 359.0 917 357 C911.0 355.0 904.5 351.2 902 350 M830 444 C827.0 443.8 818.0 443.2 812 443 C806.0 442.8 798.3 441.8 794 443 C789.7 444.2 787.3 448.8 786 450 M576 469 C578.3 466.7 585.2 458.0 590 455 C594.8 452.0 601.0 453.0 605 451 C609.0 449.0 612.5 444.3 614 443 M741 325 C738.8 326.2 733.3 331.3 728 332 C722.7 332.7 715.2 329.5 709 329 C702.8 328.5 694.0 329.0 691 329 M734 246 C733.0 244.0 731.7 237.0 728 234 C724.3 231.0 716.3 228.8 712 228 C707.7 227.2 704.5 227.7 702 229 C699.5 230.3 697.8 234.8 697 236 M854 263 C855.2 262.0 858.3 259.3 861 257 C863.7 254.7 866.7 251.8 870 249 C873.3 246.2 879.2 241.5 881 240 M880 516 C878.7 516.7 876.3 518.8 872 520 C867.7 521.2 860.3 521.5 854 523 C847.7 524.5 840.0 525.7 834 529 C828.0 532.3 820.7 540.7 818 543 M868 229 C870.2 228.7 875.3 227.0 881 227 C886.7 227.0 896.3 227.0 902 229 C907.7 231.0 912.8 237.3 915 239 M696 524 C696.3 522.3 696.3 517.3 698 514 C699.7 510.7 702.3 507.2 706 504 C709.7 500.8 716.0 498.0 720 495 C724.0 492.0 724.8 488.3 730 486 C735.2 483.7 745.0 481.2 751 481 C757.0 480.8 763.5 484.3 766 485 M686 244 C688.7 245.5 697.8 252.2 702 253 C706.2 253.8 706.8 249.0 711 249 C715.2 249.0 723.5 250.7 727 253 C730.5 255.3 729.7 259.7 732 263 C734.3 266.3 739.5 271.3 741 273 M892 299 C890.3 300.2 884.7 301.5 882 306 C879.3 310.5 879.3 320.5 876 326 C872.7 331.5 864.3 336.8 862 339 M684 269 C685.5 266.2 689.0 256.5 693 252 C697.0 247.5 703.3 243.2 708 242 C712.7 240.8 716.7 245.8 721 245 C725.3 244.2 731.8 238.3 734 237 M903 288 C902.5 286.7 902.0 284.0 900 280 C898.0 276.0 891.8 269.2 891 264 C890.2 258.8 895.8 253.3 895 249 C894.2 244.7 887.5 239.8 886 238 M792 394 C791.7 396.7 793.0 405.2 790 410 C787.0 414.8 778.7 419.5 774 423 C769.3 426.5 764.0 429.7 762 431 M813 285 C812.7 286.8 812.0 292.0 811 296 C810.0 300.0 810.2 304.7 807 309 C803.8 313.3 795.7 316.5 792 322 C788.3 327.5 786.2 338.7 785 342 M772 498 C770.3 498.5 765.7 500.3 762 501 C758.3 501.7 753.5 501.7 750 502 C746.5 502.3 744.7 500.0 741 503 C737.3 506.0 732.5 516.5 728 520 C723.5 523.5 718.3 523.0 714 524 C709.7 525.0 704.0 525.7 702 526 M895 359 C896.0 358.0 899.5 355.7 901 353 C902.5 350.3 904.2 346.0 904 343 C903.8 340.0 902.0 339.3 900 335 C898.0 330.7 893.3 320.0 892 317 M757 523 C759.8 523.3 769.2 522.5 774 525 C778.8 527.5 782.0 535.7 786 538 C790.0 540.3 796.0 538.8 798 539 M660 253 C661.7 250.2 667.8 240.7 670 236 C672.2 231.3 671.5 228.2 673 225 C674.5 221.8 674.5 218.8 679 217 C683.5 215.2 694.8 216.5 700 214 C705.2 211.5 709.0 207.5 710 202 C711.0 196.5 706.7 184.5 706 181 M671 387 C669.7 385.8 665.7 384.3 663 380 C660.3 375.7 656.5 366.2 655 361 C653.5 355.8 654.0 354.2 654 349 C654.0 343.8 656.0 334.8 655 330 C654.0 325.2 650.7 322.5 648 320 C645.3 317.5 640.5 315.8 639 315 M767 278 C764.8 280.7 758.2 288.5 754 294 C749.8 299.5 745.5 307.5 742 311 C738.5 314.5 736.0 314.5 733 315 C730.0 315.5 725.5 314.2 724 314 M826 343 C828.5 340.5 837.7 331.7 841 328 C844.3 324.3 845.7 325.7 846 321 C846.3 316.3 844.3 305.2 843 300 C841.7 294.8 841.0 292.5 838 290 C835.0 287.5 830.2 286.2 825 285 C819.8 283.8 810.0 283.3 807 283 M638 367 C639.8 367.0 645.5 367.3 649 367 C652.5 366.7 654.5 367.2 659 365 C663.5 362.8 672.2 357.2 676 354 C679.8 350.8 679.7 349.0 682 346 C684.3 343.0 687.2 338.0 690 336 C692.8 334.0 697.5 334.3 699 334 M981 243 C983.8 241.3 994.2 237.7 998 233 C1001.8 228.3 1000.8 218.8 1004 215 C1007.2 211.2 1013.7 212.3 1017 210 C1020.3 207.7 1022.8 202.5 1024 201 M662 348 C661.3 351.0 658.2 359.5 658 366 C657.8 372.5 657.8 381.8 661 387 C664.2 392.2 672.7 394.8 677 397 C681.3 399.2 685.3 399.5 687 400 M561 487 C559.5 487.2 555.3 487.3 552 488 C548.7 488.7 545.2 488.2 541 491 C536.8 493.8 530.7 501.3 527 505 C523.3 508.7 520.3 511.7 519 513 M636 414 C637.3 413.0 641.8 411.7 644 408 C646.2 404.3 647.2 396.2 649 392 C650.8 387.8 653.7 385.8 655 383 C656.3 380.2 655.5 378.7 657 375 C658.5 371.3 659.7 364.7 664 361 C668.3 357.3 679.8 354.3 683 353 M783 335 C784.2 336.8 788.7 342.5 790 346 C791.3 349.5 791.3 352.5 791 356 C790.7 359.5 789.7 361.7 788 367 C786.3 372.3 780.8 381.8 781 388 C781.2 394.2 786.5 398.3 789 404 C791.5 409.7 794.8 419.0 796 422 M713 519 C715.0 516.7 719.8 508.3 725 505 C730.2 501.7 738.5 501.8 744 499 C749.5 496.2 755.7 489.8 758 488 M724 462 C724.8 464.3 727.2 471.3 729 476 C730.8 480.7 733.7 486.3 735 490 C736.3 493.7 736.7 496.7 737 498 M976 295 C977.8 297.0 985.3 303.7 987 307 C988.7 310.3 988.3 311.5 986 315 C983.7 318.5 975.2 325.8 973 328 M672 489 C670.2 486.7 666.2 478.0 661 475 C655.8 472.0 645.5 472.5 641 471 C636.5 469.5 637.7 466.5 634 466 C630.3 465.5 623.3 467.5 619 468 C614.7 468.5 611.5 467.2 608 469 C604.5 470.8 599.7 477.3 598 479 M619 411 C621.0 409.8 626.3 407.7 631 404 C635.7 400.3 644.5 394.3 647 389 C649.5 383.7 645.5 377.5 646 372 C646.5 366.5 649.3 358.7 650 356 M819 236 C821.0 236.7 826.8 239.7 831 240 C835.2 240.3 838.3 239.3 844 238 C849.7 236.7 861.5 233.0 865 232 M906 513 C906.2 511.3 906.0 506.7 907 503 C908.0 499.3 908.7 494.3 912 491 C915.3 487.7 924.5 484.3 927 483 M565 259 C566.2 261.2 569.2 269.5 572 272 C574.8 274.5 578.7 270.8 582 274 C585.3 277.2 591.2 285.5 592 291 C592.8 296.5 590.2 302.0 587 307 C583.8 312.0 575.3 318.7 573 321 M940 236 C940.3 233.2 940.8 224.8 942 219 C943.2 213.2 947.0 205.3 947 201 C947.0 196.7 944.0 194.8 942 193 C940.0 191.2 937.7 190.3 935 190 C932.3 189.7 927.5 190.8 926 191 M609 334 C610.2 337.5 614.2 349.7 616 355 C617.8 360.3 618.3 361.8 620 366 C621.7 370.2 625.0 377.7 626 380 M624 264 C624.0 266.7 622.8 274.5 624 280 C625.2 285.5 629.8 292.2 631 297 C632.2 301.8 630.8 304.0 631 309 C631.2 314.0 630.7 322.2 632 327 C633.3 331.8 637.8 336.2 639 338 M796 341 C798.2 339.8 805.5 336.7 809 334 C812.5 331.3 815.2 328.8 817 325 C818.8 321.2 819.3 316.0 820 311 C820.7 306.0 822.5 299.2 821 295 C819.5 290.8 812.7 287.5 811 286 M931 300 C927.5 300.2 914.7 300.0 910 301 C905.3 302.0 904.5 302.5 903 306 C901.5 309.5 902.0 317.3 901 322 C900.0 326.7 899.2 330.0 897 334 C894.8 338.0 891.5 343.2 888 346 C884.5 348.8 878.0 350.2 876 351 M888 389 C890.8 388.3 901.0 387.0 905 385 C909.0 383.0 909.3 379.5 912 377 C914.7 374.5 917.8 371.3 921 370 C924.2 368.7 929.3 369.2 931 369 M928 515 C930.7 516.5 940.8 521.0 944 524 C947.2 527.0 946.8 530.2 947 533 C947.2 535.8 947.3 537.8 945 541 C942.7 544.2 937.5 547.7 933 552 C928.5 556.3 920.5 564.5 918 567 M806 357 C806.0 354.5 806.3 347.5 806 342 C805.7 336.5 805.3 329.0 804 324 C802.7 319.0 799.0 314.0 798 312 M799 346 C798.5 348.0 797.5 353.0 796 358 C794.5 363.0 791.3 370.8 790 376 C788.7 381.2 787.5 383.7 788 389 C788.5 394.3 790.0 401.8 793 408 C796.0 414.2 803.2 421.3 806 426 C808.8 430.7 809.3 434.3 810 436 M700 531 C700.0 529.2 698.5 523.3 700 520 C701.5 516.7 706.0 514.0 709 511 C712.0 508.0 716.5 503.5 718 502 M827 363 C827.5 360.8 828.5 354.0 830 350 C831.5 346.0 832.3 341.8 836 339 C839.7 336.2 847.8 334.5 852 333 C856.2 331.5 857.5 331.5 861 330 C864.5 328.5 868.5 326.0 873 324 C877.5 322.0 885.5 319.0 888 318 M938 529 C934.8 527.7 924.7 523.8 919 521 C913.3 518.2 907.3 514.8 904 512 C900.7 509.2 901.3 506.8 899 504 C896.7 501.2 893.7 496.5 890 495 C886.3 493.5 881.5 493.3 877 495 C872.5 496.7 865.3 503.3 863 505 M687 333 C689.5 332.7 697.8 330.7 702 331 C706.2 331.3 709.3 332.3 712 335 C714.7 337.7 714.5 344.2 718 347 C721.5 349.8 728.0 352.2 733 352 C738.0 351.8 742.5 347.5 748 346 C753.5 344.5 763.0 343.5 766 343 M857 228 C858.7 229.7 864.0 236.3 867 238 C870.0 239.7 872.3 239.2 875 238 C877.7 236.8 881.7 232.2 883 231 M891 404 C892.7 402.5 898.8 398.2 901 395 C903.2 391.8 902.7 387.8 904 385 C905.3 382.2 908.2 381.0 909 378 C909.8 375.0 909.0 368.8 909 367 M785 484 C783.3 481.7 777.5 473.8 775 470 C772.5 466.2 772.3 463.7 770 461 C767.7 458.3 762.5 455.2 761 454 M574 423 C575.0 420.8 578.7 413.7 580 410 C581.3 406.3 579.7 404.2 582 401 C584.3 397.8 592.0 392.7 594 391 M973 363 C971.3 362.7 966.3 362.0 963 361 C959.7 360.0 957.7 356.2 953 357 C948.3 357.8 939.8 363.3 935 366 C930.2 368.7 925.8 371.8 924 373 M668 504 C669.8 502.8 675.3 498.5 679 497 C682.7 495.5 685.2 497.2 690 495 C694.8 492.8 705.0 485.8 708 484 M768 475 C769.3 476.7 771.2 483.2 776 485 C780.8 486.8 791.5 486.0 797 486 C802.5 486.0 803.8 486.7 809 485 C814.2 483.3 824.8 477.5 828 476 M704 430 C706.2 430.7 713.2 433.5 717 434 C720.8 434.5 723.7 434.0 727 433 C730.3 432.0 734.7 431.7 737 428 C739.3 424.3 740.5 415.5 741 411 C741.5 406.5 739.7 404.2 740 401 C740.3 397.8 742.5 393.5 743 392 M676 488 C678.3 490.2 685.5 498.2 690 501 C694.5 503.8 698.7 505.0 703 505 C707.3 505.0 711.2 501.7 716 501 C720.8 500.3 727.0 501.8 732 501 C737.0 500.2 741.7 499.5 746 496 C750.3 492.5 756.0 482.7 758 480 M850 522 C852.2 522.3 858.2 524.7 863 524 C867.8 523.3 874.0 521.3 879 518 C884.0 514.7 890.5 509.0 893 504 C895.5 499.0 893.7 492.5 894 488 C894.3 483.5 893.5 480.7 895 477 C896.5 473.3 901.7 467.8 903 466 M843 404 C841.0 406.2 834.8 414.3 831 417 C827.2 419.7 824.0 416.8 820 420 C816.0 423.2 809.0 429.8 807 436 C805.0 442.2 809.2 450.8 808 457 C806.8 463.2 801.0 467.3 800 473 C799.0 478.7 801.7 488.0 802 491 M598 316 C598.0 313.7 595.8 306.5 598 302 C600.2 297.5 605.5 291.7 611 289 C616.5 286.3 626.2 287.8 631 286 C635.8 284.2 638.8 282.3 640 278 C641.2 273.7 637.7 265.0 638 260 C638.3 255.0 641.3 250.0 642 248 M737 433 C738.3 431.0 742.2 423.3 745 421 C747.8 418.7 751.0 420.5 754 419 C757.0 417.5 759.8 414.0 763 412 C766.2 410.0 771.3 407.8 773 407 M851 352 C849.0 351.8 842.3 351.2 839 351 C835.7 350.8 835.0 349.8 831 351 C827.0 352.2 819.5 354.0 815 358 C810.5 362.0 807.7 369.8 804 375 C800.3 380.2 795.5 384.5 793 389 C790.5 393.5 789.7 399.8 789 402 M854 335 C856.5 337.2 864.5 343.5 869 348 C873.5 352.5 879.5 356.8 881 362 C882.5 367.2 877.2 374.5 878 379 C878.8 383.5 884.3 385.2 886 389 C887.7 392.8 887.7 399.8 888 402 M953 356 C952.3 354.7 948.8 351.5 949 348 C949.2 344.5 950.5 338.3 954 335 C957.5 331.7 964.0 329.2 970 328 C976.0 326.8 986.7 328.0 990 328 M488 443 C490.5 443.7 499.5 445.0 503 447 C506.5 449.0 507.8 452.3 509 455 C510.2 457.7 510.7 458.5 510 463 C509.3 467.5 505.8 478.8 505 482 M378 456 C380.0 455.8 386.7 456.8 390 455 C393.3 453.2 395.8 448.3 398 445 C400.2 441.7 401.8 438.2 403 435 C404.2 431.8 404.7 427.5 405 426 M512 474 C514.5 475.7 521.7 482.5 527 484 C532.3 485.5 539.7 482.7 544 483 C548.3 483.3 549.3 483.8 553 486 C556.7 488.2 563.8 494.3 566 496 M372 468 C372.7 469.7 375.2 473.7 376 478 C376.8 482.3 376.5 488.2 377 494 C377.5 499.8 379.3 508.5 379 513 C378.7 517.5 375.8 517.5 375 521 C374.2 524.5 373.5 530.5 374 534 C374.5 537.5 377.3 540.7 378 542 M384 408 C384.8 406.5 387.0 403.0 389 399 C391.0 395.0 394.7 389.2 396 384 C397.3 378.8 398.5 372.3 397 368 C395.5 363.7 388.5 362.2 387 358 C385.5 353.8 386.7 347.3 388 343 C389.3 338.7 393.8 333.8 395 332 M522 417 C520.0 414.5 513.8 405.7 510 402 C506.2 398.3 502.8 395.8 499 395 C495.2 394.2 492.0 396.7 487 397 C482.0 397.3 474.7 398.2 469 397 C463.3 395.8 458.5 390.0 453 390 C447.5 390.0 438.8 395.8 436 397 M308 435 C310.7 436.0 319.5 437.2 324 441 C328.5 444.8 330.2 454.0 335 458 C339.8 462.0 348.2 461.3 353 465 C357.8 468.7 360.8 476.3 364 480 C367.2 483.7 370.7 485.8 372 487 M548 425 C546.0 425.3 538.8 425.3 536 427 C533.2 428.7 534.8 432.0 531 435 C527.2 438.0 518.2 444.3 513 445 C507.8 445.7 503.8 439.3 500 439 C496.2 438.7 491.7 442.3 490 443 M427 482 C428.5 480.8 433.8 478.8 436 475 C438.2 471.2 439.2 465.3 440 459 C440.8 452.7 440.8 440.7 441 437 M555 447 C558.0 448.5 568.7 451.7 573 456 C577.3 460.3 578.5 468.5 581 473 C583.5 477.5 586.2 478.8 588 483 C589.8 487.2 590.3 493.7 592 498 C593.7 502.3 597.0 507.2 598 509 M432 473 C432.3 471.7 431.7 468.3 434 465 C436.3 461.7 442.0 456.3 446 453 C450.0 449.7 453.8 447.8 458 445 C462.2 442.2 468.8 437.5 471 436 M429 455 C429.2 451.3 428.8 439.7 430 433 C431.2 426.3 436.5 420.5 436 415 C435.5 409.5 429.2 404.5 427 400 C424.8 395.5 423.7 390.0 423 388 M471 513 C469.2 514.0 463.2 518.2 460 519 C456.8 519.8 456.2 517.2 452 518 C447.8 518.8 439.2 522.3 435 524 C430.8 525.7 428.3 527.3 427 528 M498 432 C496.2 431.5 490.7 429.7 487 429 C483.3 428.3 481.3 427.0 476 428 C470.7 429.0 460.5 431.5 455 435 C449.5 438.5 445.5 443.5 443 449 C440.5 454.5 441.3 463.2 440 468 C438.7 472.8 435.8 476.3 435 478 M501 479 C502.7 481.2 507.0 489.2 511 492 C515.0 494.8 521.2 494.8 525 496 C528.8 497.2 531.0 498.2 534 499 C537.0 499.8 538.2 500.2 543 501 C547.8 501.8 556.8 502.8 563 504 C569.2 505.2 577.2 507.3 580 508 M527 396 C530.0 395.7 538.5 394.5 545 394 C551.5 393.5 560.5 394.7 566 393 C571.5 391.3 576.0 385.5 578 384 M328 432 C325.8 431.5 319.3 428.0 315 429 C310.7 430.0 305.2 434.7 302 438 C298.8 441.3 298.7 445.7 296 449 C293.3 452.3 290.5 456.3 286 458 C281.5 459.7 273.8 460.3 269 459 C264.2 457.7 259.0 451.5 257 450 M575 502 C575.0 505.0 573.7 515.7 575 520 C576.3 524.3 579.2 526.0 583 528 C586.8 530.0 593.5 530.7 598 532 C602.5 533.3 604.8 534.5 610 536 C615.2 537.5 625.8 540.2 629 541 M406 430 C407.2 433.2 410.2 444.3 413 449 C415.8 453.7 420.8 455.2 423 458 C425.2 460.8 425.5 464.7 426 466 M597 442 C595.5 439.0 591.7 428.3 588 424 C584.3 419.7 580.0 417.8 575 416 C570.0 414.2 562.5 413.5 558 413 C553.5 412.5 551.8 414.5 548 413 C544.2 411.5 538.8 408.2 535 404 C531.2 399.8 526.7 390.7 525 388 M585 382 C583.7 384.0 577.5 388.8 577 394 C576.5 399.2 578.7 408.3 582 413 C585.3 417.7 592.5 418.7 597 422 C601.5 425.3 607.0 431.2 609 433 M553 515 C551.2 512.2 544.3 502.2 542 498 C539.7 493.8 540.7 492.8 539 490 C537.3 487.2 533.0 485.2 532 481 C531.0 476.8 534.0 469.0 533 465 C532.0 461.0 529.3 459.5 526 457 C522.7 454.5 515.2 451.2 513 450 M473 434 C472.2 436.3 468.5 443.7 468 448 C467.5 452.3 471.2 455.7 470 460 C468.8 464.3 462.5 471.7 461 474 M489 482 C491.2 483.2 497.2 487.7 502 489 C506.8 490.3 511.7 489.5 518 490 C524.3 490.5 535.7 490.3 540 492 C544.3 493.7 541.8 496.0 544 500 C546.2 504.0 552.2 510.2 553 516 C553.8 521.8 549.7 531.8 549 535 M490 469 C488.2 469.7 482.5 472.7 479 473 C475.5 473.3 473.7 469.5 469 471 C464.3 472.5 455.3 478.5 451 482 C446.7 485.5 446.2 489.8 443 492 C439.8 494.2 433.8 494.5 432 495 M562 480 C559.5 482.3 552.0 491.2 547 494 C542.0 496.8 537.3 498.0 532 497 C526.7 496.0 518.2 491.2 515 488 C511.8 484.8 515.5 482.2 513 478 C510.5 473.8 502.2 465.5 500 463 M501 437 C498.3 436.7 490.2 433.8 485 435 C479.8 436.2 474.0 440.3 470 444 C466.0 447.7 465.3 452.5 461 457 C456.7 461.5 447.0 467.0 444 471 C441.0 475.0 443.2 479.3 443 481 M577 462 C575.0 462.7 569.3 465.7 565 466 C560.7 466.3 554.3 465.3 551 464 C547.7 462.7 548.5 461.3 545 458 C541.5 454.7 534.2 447.2 530 444 C525.8 440.8 521.7 439.8 520 439 M307 403 C307.8 405.2 309.0 412.3 312 416 C315.0 419.7 322.0 420.7 325 425 C328.0 429.3 329.2 439.2 330 442 M359 483 C360.8 480.3 366.2 470.3 370 467 C373.8 463.7 379.0 465.2 382 463 C385.0 460.8 387.0 455.5 388 454 M461 503 C459.0 502.2 452.8 500.8 449 498 C445.2 495.2 442.3 489.8 438 486 C433.7 482.2 425.5 476.8 423 475 M401 388 C400.3 390.7 400.3 398.8 397 404 C393.7 409.2 385.7 413.5 381 419 C376.3 424.5 371.0 434.0 369 437 M562 384 C563.0 386.5 567.0 394.3 568 399 C569.0 403.7 567.0 408.7 568 412 C569.0 415.3 569.8 417.2 574 419 C578.2 420.8 587.0 423.8 593 423 C599.0 422.2 607.2 415.5 610 414 M427 455 C425.2 453.0 420.5 446.5 416 443 C411.5 439.5 405.7 435.8 400 434 C394.3 432.2 387.7 434.0 382 432 C376.3 430.0 368.7 423.7 366 422 M393 488 C395.2 488.0 401.8 488.0 406 488 C410.2 488.0 413.7 489.2 418 488 C422.3 486.8 428.3 485.0 432 481 C435.7 477.0 437.0 467.3 440 464 C443.0 460.7 446.2 461.7 450 461 C453.8 460.3 460.8 460.2 463 460 M594 511 C591.5 511.0 583.3 511.2 579 511 C574.7 510.8 571.2 511.8 568 510 C564.8 508.2 561.3 501.7 560 500 M345 405 C344.8 402.8 343.3 396.3 344 392 C344.7 387.7 346.5 382.2 349 379 C351.5 375.8 354.0 373.5 359 373 C364.0 372.5 375.7 375.5 379 376 M417 410 C415.7 407.2 413.0 396.7 409 393 C405.0 389.3 399.0 389.3 393 388 C387.0 386.7 376.3 385.5 373 385 M318 459 C315.3 458.3 306.5 455.2 302 455 C297.5 454.8 294.7 456.0 291 458 C287.3 460.0 282.5 463.8 280 467 C277.5 470.2 278.8 473.5 276 477 C273.2 480.5 267.0 483.0 263 488 C259.0 493.0 253.8 503.8 252 507 M365 460 C364.7 461.5 363.2 465.8 363 469 C362.8 472.2 361.0 475.7 364 479 C367.0 482.3 376.0 487.2 381 489 C386.0 490.8 388.5 488.7 394 490 C399.5 491.3 410.7 495.8 414 497 M364 387 C362.2 384.5 356.5 376.3 353 372 C349.5 367.7 348.0 363.5 343 361 C338.0 358.5 329.2 359.2 323 357 C316.8 354.8 312.3 349.2 306 348 C299.7 346.8 288.5 349.7 285 350 M340 422 C338.7 423.2 334.7 427.2 332 429 C329.3 430.8 328.2 430.2 324 433 C319.8 435.8 313.0 443.0 307 446 C301.0 449.0 292.3 451.0 288 451 C283.7 451.0 282.2 446.8 281 446 M370 491 C367.7 489.7 360.7 486.2 356 483 C351.3 479.8 345.0 475.2 342 472 C339.0 468.8 338.7 465.3 338 464 M568 389 C568.2 391.5 567.3 400.3 569 404 C570.7 407.7 574.5 408.0 578 411 C581.5 414.0 585.3 417.5 590 422 C594.7 426.5 601.2 432.8 606 438 C610.8 443.2 617.0 449.0 619 453 C621.0 457.0 618.2 460.5 618 462 M591 499 C593.0 499.5 599.2 502.2 603 502 C606.8 501.8 611.7 499.8 614 498 C616.3 496.2 615.3 494.3 617 491 C618.7 487.7 622.8 480.2 624 478 M449 288 C451.5 288.8 458.8 291.0 464 293 C469.2 295.0 476.5 295.5 480 300 C483.5 304.5 484.2 316.7 485 320 M489 293 C488.7 294.7 489.5 298.7 487 303 C484.5 307.3 479.3 315.3 474 319 C468.7 322.7 460.0 323.8 455 325 C450.0 326.2 449.5 325.5 444 326 C438.5 326.5 428.7 328.3 422 328 C415.3 327.7 407.0 324.7 404 324 M558 355 C558.2 351.8 557.8 340.2 559 336 C560.2 331.8 562.0 331.8 565 330 C568.0 328.2 575.0 325.8 577 325 M472 315 C470.8 317.7 466.7 326.3 465 331 C463.3 335.7 463.5 339.0 462 343 C460.5 347.0 457.0 353.0 456 355 M516 350 C518.0 349.0 523.3 346.0 528 344 C532.7 342.0 539.3 339.2 544 338 C548.7 336.8 551.3 336.8 556 337 C560.7 337.2 566.8 339.5 572 339 C577.2 338.5 584.5 334.8 587 334 M376 367 C373.7 367.3 365.7 367.7 362 369 C358.3 370.3 358.0 374.5 354 375 C350.0 375.5 343.2 372.8 338 372 C332.8 371.2 326.8 371.7 323 370 C319.2 368.3 316.3 363.3 315 362 M353 354 C351.2 355.2 346.2 360.0 342 361 C337.8 362.0 333.3 360.0 328 360 C322.7 360.0 313.0 360.8 310 361 M404 288 C403.0 286.7 401.7 283.8 398 280 C394.3 276.2 385.7 269.5 382 265 C378.3 260.5 378.7 257.8 376 253 C373.3 248.2 367.7 240.5 366 236 C364.3 231.5 366.0 227.7 366 226 M480 288 C477.7 287.2 469.7 285.3 466 283 C462.3 280.7 460.0 276.7 458 274 C456.0 271.3 457.0 269.5 454 267 C451.0 264.5 442.3 260.3 440 259 M387 314 C388.7 311.3 395.7 303.5 397 298 C398.3 292.5 394.5 285.5 395 281 C395.5 276.5 398.0 275.7 400 271 C402.0 266.3 404.7 257.8 407 253 C409.3 248.2 412.8 243.8 414 242 M321 299 C318.7 299.0 311.2 299.3 307 299 C302.8 298.7 301.2 296.5 296 297 C290.8 297.5 281.0 299.0 276 302 C271.0 305.0 270.8 312.5 266 315 C261.2 317.5 250.2 316.7 247 317 M455 244 C457.0 245.2 462.8 249.0 467 251 C471.2 253.0 476.5 252.7 480 256 C483.5 259.3 486.7 268.5 488 271 M508 251 C506.3 249.3 499.7 244.5 498 241 C496.3 237.5 499.3 233.5 498 230 C496.7 226.5 494.3 222.3 490 220 C485.7 217.7 476.5 215.5 472 216 C467.5 216.5 465.5 219.3 463 223 C460.5 226.7 458.0 235.5 457 238 M541 278 C539.7 278.8 535.0 280.8 533 283 C531.0 285.2 531.0 288.8 529 291 C527.0 293.2 523.3 292.3 521 296 C518.7 299.7 516.5 308.8 515 313 C513.5 317.2 514.7 317.5 512 321 C509.3 324.5 501.2 331.8 499 334 M745 505 C745.3 503.3 746.5 498.0 747 495 C747.5 492.0 747.2 490.3 748 487 C748.8 483.7 752.3 480.5 752 475 C751.7 469.5 748.8 459.3 746 454 C743.2 448.7 738.0 445.8 735 443 C732.0 440.2 729.2 438.0 728 437 M715 561 C714.3 563.2 710.8 570.0 711 574 C711.2 578.0 715.7 580.0 716 585 C716.3 590.0 715.0 599.5 713 604 C711.0 608.5 705.8 609.3 704 612 C702.2 614.7 703.0 616.5 702 620 C701.0 623.5 698.7 630.8 698 633 M739 545 C738.5 543.0 737.5 537.8 736 533 C734.5 528.2 731.2 521.8 730 516 C728.8 510.2 730.5 502.0 729 498 C727.5 494.0 722.7 496.2 721 492 C719.3 487.8 719.3 476.2 719 473 M611 520 C607.7 520.0 596.7 520.3 591 520 C585.3 519.7 580.7 520.3 577 518 C573.3 515.7 570.3 509.3 569 506 C567.7 502.7 569.0 499.3 569 498 M730 559 C731.7 560.8 735.3 568.2 740 570 C744.7 571.8 753.5 569.2 758 570 C762.5 570.8 765.5 574.2 767 575 M666 566 C666.2 564.3 665.3 560.2 667 556 C668.7 551.8 673.2 545.5 676 541 C678.8 536.5 682.5 532.7 684 529 C685.5 525.3 684.8 520.7 685 519 M615 521 C616.3 519.8 621.5 518.2 623 514 C624.5 509.8 626.2 501.3 624 496 C621.8 490.7 614.0 485.2 610 482 C606.0 478.8 603.3 479.0 600 477 C596.7 475.0 593.0 472.2 590 470 C587.0 467.8 583.3 465.0 582 464 M874 530 C876.8 529.3 885.5 528.8 891 526 C896.5 523.2 903.3 516.7 907 513 C910.7 509.3 911.5 508.3 913 504 C914.5 499.7 915.5 489.8 916 487 M808 518 C810.0 520.2 814.7 528.5 820 531 C825.3 533.5 833.8 534.5 840 533 C846.2 531.5 850.7 522.7 857 522 C863.3 521.3 874.5 527.8 878 529 M758 527 C754.7 527.8 742.8 529.7 738 532 C733.2 534.3 731.5 537.2 729 541 C726.5 544.8 725.5 551.5 723 555 C720.5 558.5 717.7 558.7 714 562 C710.3 565.3 706.5 572.0 701 575 C695.5 578.0 684.3 579.2 681 580 M774 528 C773.5 525.8 770.0 519.5 771 515 C772.0 510.5 779.0 505.5 780 501 C781.0 496.5 777.5 490.2 777 488 M735 523 C732.7 520.5 723.8 513.3 721 508 C718.2 502.7 719.3 496.8 718 491 C716.7 485.2 715.3 477.0 713 473 C710.7 469.0 705.5 468.0 704 467 M718 503 C721.0 503.3 729.8 504.8 736 505 C742.2 505.2 749.7 506.5 755 504 C760.3 501.5 765.8 492.3 768 490 M820 533 C817.5 530.8 807.8 524.5 805 520 C802.2 515.5 804.5 509.5 803 506 C801.5 502.5 797.2 500.2 796 499 M864 511 C862.2 511.7 856.2 514.2 853 515 C849.8 515.8 849.2 513.7 845 516 C840.8 518.3 830.8 526.8 828 529 M685 551 C687.5 551.8 696.0 555.3 700 556 C704.0 556.7 706.5 556.3 709 555 C711.5 553.7 711.2 550.0 715 548 C718.8 546.0 729.2 543.8 732 543 M663 568 C665.0 568.0 671.7 569.8 675 568 C678.3 566.2 680.3 560.5 683 557 C685.7 553.5 688.2 548.8 691 547 C693.8 545.2 698.5 546.2 700 546 M774 522 C773.3 520.5 771.7 515.7 770 513 C768.3 510.3 767.8 508.3 764 506 C760.2 503.7 749.8 500.2 747 499 M652 528 C653.5 529.2 656.3 532.7 661 535 C665.7 537.3 675.8 539.7 680 542 C684.2 544.3 684.8 546.2 686 549 C687.2 551.8 686.5 555.7 687 559 C687.5 562.3 689.8 564.5 689 569 C688.2 573.5 683.2 583.2 682 586 M661 585 C662.5 582.2 667.3 573.0 670 568 C672.7 563.0 673.0 559.2 677 555 C681.0 550.8 691.2 545.0 694 543 M825 559 C824.2 562.0 819.7 571.3 820 577 C820.3 582.7 824.7 589.0 827 593 C829.3 597.0 832.8 599.7 834 601 M890 562 C888.7 559.3 884.5 549.7 882 546 C879.5 542.3 878.5 543.0 875 540 C871.5 537.0 864.3 531.5 861 528 C857.7 524.5 856.0 520.5 855 519 M716 559 C718.7 559.2 726.7 559.0 732 560 C737.3 561.0 742.5 565.5 748 565 C753.5 564.5 759.0 558.0 765 557 C771.0 556.0 779.5 557.5 784 559 C788.5 560.5 790.7 564.8 792 566 M776 552 C777.8 549.3 782.5 539.8 787 536 C791.5 532.2 797.3 529.2 803 529 C808.7 528.8 818.0 534.0 821 535 M722 508 C720.8 504.7 717.0 493.2 715 488 C713.0 482.8 712.8 480.7 710 477 C707.2 473.3 700.0 471.2 698 466 C696.0 460.8 698.2 451.7 698 446 C697.8 440.3 697.2 434.3 697 432 M913 255 C909.7 254.8 898.3 254.7 893 254 C887.7 253.3 884.7 250.5 881 251 C877.3 251.5 872.7 256.0 871 257 M957 372 C954.2 371.0 945.7 365.5 940 366 C934.3 366.5 926.7 371.7 923 375 C919.3 378.3 921.0 383.7 918 386 C915.0 388.3 907.2 388.5 905 389 M905 548 C903.0 547.3 896.7 547.3 893 544 C889.3 540.7 885.8 533.8 883 528 C880.2 522.2 876.2 514.2 876 509 C875.8 503.8 882.2 502.0 882 497 C881.8 492.0 878.0 482.8 875 479 C872.0 475.2 865.8 474.8 864 474 M942 457 C944.2 454.8 950.0 447.2 955 444 C960.0 440.8 967.5 441.5 972 438 C976.5 434.5 980.3 425.5 982 423 M908 361 C904.3 361.2 892.3 361.2 886 362 C879.7 362.8 874.8 365.3 870 366 C865.2 366.7 862.2 366.0 857 366 C851.8 366.0 843.8 367.7 839 366 C834.2 364.3 829.8 357.7 828 356 M920 583 C922.2 584.0 928.8 585.3 933 589 C937.2 592.7 942.2 599.3 945 605 C947.8 610.7 949.2 620.0 950 623 M884 325 C886.7 325.7 896.0 327.8 900 329 C904.0 330.2 903.7 331.0 908 332 C912.3 333.0 921.2 333.7 926 335 C930.8 336.3 934.0 337.7 937 340 C940.0 342.3 942.8 347.5 944 349 M940 363 C942.7 364.2 949.8 368.2 956 370 C962.2 371.8 971.0 371.7 977 374 C983.0 376.3 989.5 382.3 992 384 M911 261 C909.8 259.2 907.7 252.7 904 250 C900.3 247.3 892.3 247.3 889 245 C885.7 242.7 884.8 237.5 884 236 M961 264 C959.2 267.2 953.7 278.8 950 283 C946.3 287.2 942.8 287.5 939 289 C935.2 290.5 929.0 291.5 927 292 M978 385 C975.5 383.3 967.3 377.3 963 375 C958.7 372.7 955.5 373.5 952 371 C948.5 368.5 947.2 362.5 942 360 C936.8 357.5 926.8 357.5 921 356 C915.2 354.5 911.0 352.3 907 351 C903.0 349.7 898.7 348.5 897 348 M978 214 C976.5 217.0 971.0 227.5 969 232 C967.0 236.5 966.8 236.5 966 241 C965.2 245.5 964.0 252.8 964 259 C964.0 265.2 966.7 273.5 966 278 C965.3 282.5 961.5 283.5 960 286 C958.5 288.5 957.5 291.8 957 293 M939 473 C939.0 474.8 937.0 480.5 939 484 C941.0 487.5 947.8 489.5 951 494 C954.2 498.5 955.2 505.5 958 511 C960.8 516.5 964.3 523.7 968 527 C971.7 530.3 978.0 530.3 980 531 M951 579 C950.5 576.8 947.0 570.8 948 566 C949.0 561.2 954.8 554.8 957 550 C959.2 545.2 960.3 539.2 961 537 M969 335 C969.8 337.5 973.0 344.2 974 350 C975.0 355.8 973.5 365.0 975 370 C976.5 375.0 979.3 378.2 983 380 C986.7 381.8 994.7 380.8 997 381 M935 534 C933.3 531.8 929.7 524.7 925 521 C920.3 517.3 911.7 516.2 907 512 C902.3 507.8 901.5 499.8 897 496 C892.5 492.2 884.5 492.0 880 489 C875.5 486.0 871.8 483.2 870 478 C868.2 472.8 869.2 461.3 869 458 M962 521 C959.2 520.3 950.2 519.3 945 517 C939.8 514.7 934.8 509.0 931 507 C927.2 505.0 926.3 506.7 922 505 C917.7 503.3 909.7 498.3 905 497 C900.3 495.7 895.8 497.0 894 497 M905 234 C903.0 231.8 898.3 223.5 893 221 C887.7 218.5 877.7 219.0 873 219 C868.3 219.0 866.3 220.7 865 221 M949 252 C946.7 253.3 938.5 258.0 935 260 C931.5 262.0 931.5 262.7 928 264 C924.5 265.3 916.3 267.3 914 268 M933 313 C934.8 312.3 939.0 310.3 944 309 C949.0 307.7 957.0 307.8 963 305 C969.0 302.2 974.5 295.7 980 292 C985.5 288.3 992.5 286.0 996 283 C999.5 280.0 1000.2 275.5 1001 274 M969 303 C966.5 304.0 958.7 306.7 954 309 C949.3 311.3 944.8 314.8 941 317 C937.2 319.2 936.2 322.2 931 322 C925.8 321.8 916.0 319.5 910 316 C904.0 312.5 897.5 303.5 895 301 M916 587 C918.0 588.2 925.5 589.5 928 594 C930.5 598.5 930.7 608.8 931 614 C931.3 619.2 930.7 621.7 930 625 C929.3 628.3 926.5 629.5 927 634 C927.5 638.5 928.8 647.3 933 652 C937.2 656.7 948.8 660.3 952 662 M882 504 C883.2 502.7 884.7 498.5 889 496 C893.3 493.5 902.5 492.3 908 489 C913.5 485.7 919.8 481.2 922 476 C924.2 470.8 921.2 461.0 921 458 M947 203 C947.8 206.3 951.7 217.0 952 223 C952.3 229.0 949.0 234.2 949 239 C949.0 243.8 949.3 248.0 952 252 C954.7 256.0 962.8 259.2 965 263 C967.2 266.8 963.8 271.7 965 275 C966.2 278.3 970.8 281.7 972 283 M919 552 C920.7 550.5 925.2 544.7 929 543 C932.8 541.3 937.8 540.7 942 542 C946.2 543.3 950.0 549.8 954 551 C958.0 552.2 960.8 551.0 966 549 C971.2 547.0 978.8 539.5 985 539 C991.2 538.5 1000.0 544.8 1003 546 M938 296 C937.5 297.3 938.3 301.5 935 304 C931.7 306.5 924.2 311.2 918 311 C911.8 310.8 904.2 305.2 898 303 C891.8 300.8 887.2 299.2 881 298 C874.8 296.8 864.3 296.3 861 296 M973 250 C975.2 251.2 980.8 257.0 986 257 C991.2 257.0 999.7 250.3 1004 250 C1008.3 249.7 1009.7 252.7 1012 255 C1014.3 257.3 1017.0 262.5 1018 264 M943 558 C945.7 555.8 954.2 549.0 959 545 C963.8 541.0 969.2 537.5 972 534 C974.8 530.5 973.3 526.8 976 524 C978.7 521.2 985.2 520.7 988 517 C990.8 513.3 992.2 504.5 993 502 M894 276 C891.3 275.5 883.3 275.3 878 273 C872.7 270.7 867.7 263.8 862 262 C856.3 260.2 849.8 264.2 844 262 C838.2 259.8 831.0 253.3 827 249 C823.0 244.7 820.8 240.8 820 236 C819.2 231.2 821.7 222.7 822 220 M893 394 C889.7 394.7 877.5 395.0 873 398 C868.5 401.0 868.7 408.5 866 412 C863.3 415.5 861.3 417.2 857 419 C852.7 420.8 842.8 422.3 840 423 M639 293 C640.3 293.7 642.2 296.5 647 297 C651.8 297.5 662.0 297.7 668 296 C674.0 294.3 680.5 288.5 683 287 M749 273 C749.5 270.7 750.8 264.8 752 259 C753.2 253.2 753.2 244.2 756 238 C758.8 231.8 767.0 226.3 769 222 C771.0 217.7 768.2 216.5 768 212 C767.8 207.5 768.0 197.8 768 195 M652 263 C653.2 263.7 656.7 264.0 659 267 C661.3 270.0 665.2 276.2 666 281 C666.8 285.8 665.2 291.0 664 296 C662.8 301.0 661.0 307.5 659 311 C657.0 314.5 653.3 313.3 652 317 C650.7 320.7 651.2 330.3 651 333 M647 255 C649.2 252.7 655.5 244.0 660 241 C664.5 238.0 670.0 240.0 674 237 C678.0 234.0 682.0 227.7 684 223 C686.0 218.3 685.7 211.3 686 209 M618 298 C616.7 297.2 614.7 294.3 610 293 C605.3 291.7 594.2 291.8 590 290 C585.8 288.2 587.5 284.5 585 282 C582.5 279.5 579.2 276.7 575 275 C570.8 273.3 562.5 272.5 560 272 M692 250 C693.5 250.7 697.7 251.3 701 254 C704.3 256.7 708.5 262.3 712 266 C715.5 269.7 720.3 274.3 722 276 M665 271 C665.3 267.7 666.0 255.5 667 251 C668.0 246.5 667.8 247.5 671 244 C674.2 240.5 683.5 232.3 686 230 M669 291 C670.5 293.5 674.8 302.3 678 306 C681.2 309.7 684.3 311.2 688 313 C691.7 314.8 695.8 317.3 700 317 C704.2 316.7 708.2 310.8 713 311 C717.8 311.2 726.3 316.8 729 318 M749 282 C749.3 280.2 750.7 274.3 751 271 C751.3 267.7 752.7 266.3 751 262 C749.3 257.7 742.2 250.0 741 245 C739.8 240.0 741.5 236.5 744 232 C746.5 227.5 754.0 220.3 756 218 M742 285 C739.3 286.8 730.2 292.7 726 296 C721.8 299.3 718.5 301.8 717 305 C715.5 308.2 717.0 313.3 717 315 M673 241 C674.0 243.0 678.8 248.2 679 253 C679.2 257.8 676.2 266.5 674 270 C671.8 273.5 668.5 271.7 666 274 C663.5 276.3 660.2 282.3 659 284 M745 226 C743.7 227.0 740.5 229.0 737 232 C733.5 235.0 729.0 240.8 724 244 C719.0 247.2 709.8 249.8 707 251" stroke="#D8D8DA" stroke-width="2" fill="none" stroke-linejoin="round"/>
<path d="M469 476L479 464L511 488L516 503L546 493L546 464L568 478L600 487L640 500L648 510L647 545L645 575L622 558L573 544L536 537L504 537L483 518Z" fill="#CBDFB3"/><path d="M482 336L492 337L525 368L545 412L528 412L510 400L484 370Z" fill="#CBDFB3"/><path d="M782 437L800 436L891 435L896 471L916 476L898 496L898 510L877 510L872 489L866 485L852 487L852 510L782 510Z" fill="#CBDFB3"/><path d="M757 546L793 544L848 558L845 567L825 569L814 592L775 592L770 567Z" fill="#CBDFB3"/><path d="M989 223L1034 223L1034 197L1074 197L1072 209L1060 228L1060 239L1041 244L1018 256L989 258Z" fill="#CBDFB3"/><path d="M1163 197L1180 197L1182 245L1168 245Z" fill="#CBDFB3"/><path d="M1266 566L1316 507L1321 557L1300 575L1270 575Z" fill="#CBDFB3"/><path d="M958 445L987 445L987 466L958 466Z" fill="#CBDFB3"/>
<path d="M1008 358L1050 358L1052 372L1058 392L1008 392Z" fill="#EFDCD4"/>
<path d="M682 432L702 430L722 455L705 460L688 450Z" fill="#EEE0D6"/>
<path d="M383 400L393 402L420 432L445 449L460 469L474 493L489 523L500 545L480 545L455 480L430 450Z" fill="#F1E7CF"/>
<path d="M277 390L284 392L284 412L297 412L297 400L314 391L358 395L388 407L415 437L437 451L455 474L472 508L487 530L504 545L536 545L573 553L622 567L647 580L657 592L277 592Z" fill="#AAC5F0"/>
<path d="M1463 227L1446 244L1431 278L1413 308L1401 334L1390 355L1392 380L1437 410L1490 385L1502 413L1504 438L1521 440L1521 468L1507 489L1548 482L1575 480L1575 197L1495 197Z" fill="#F3F2EE"/>
<path d="M1398 197L1495 197L1463 227L1446 244L1431 278L1413 308L1401 334L1390 355L1392 380L1437 410L1490 385L1502 413L1503 419L1500 428L1504 438L1521 440L1521 468L1507 489L1548 482L1575 480L1575 592L1425 592L1414 558L1400 529L1357 501L1344 486L1344 478L1395 512L1391 501L1380 472L1363 438L1354 421L1346 387L1347 350L1357 330L1373 293L1390 268L1351 242L1356 231L1401 244L1398 218Z" fill="#AAC5F0"/>
<path d="M1392 380L1437 410L1426 417L1426 428L1424 452L1420 466L1416 466L1413 458L1405 443L1397 422L1393 420Z" fill="#F3F2EE"/>
<path d="M1437 410L1449 419L1471 453L1464 460L1466 503L1437 507L1430 498L1434 480L1437 454L1439 425Z" fill="#EEEDE9"/>
<path d="M1441 521L1475 507L1493 592L1459 592L1457 552Z" fill="#EEEDE9"/>
<path d="M1320 572L1336 572L1337 592L1320 592Z" fill="#AAC5F0"/>
<path d="M1371 559L1380 556L1387 592L1371 592Z" fill="#AAC5F0"/>
<path d="M1482 430L1500 412M1465 503L1505 488" stroke="#E4E4E6" stroke-width="2"/>
<path d="M1400 360L1455 250 M1408 358L1463 250 M1416 356L1471 250 M1424 354L1479 250 M1432 352L1487 250 M1440 350L1495 250 M1448 348L1503 250 M1456 346L1511 250 M1464 344L1519 250 M1432 292L1490 262 M1432 310L1490 280 M1432 328L1490 298 M1432 346L1490 316 M1432 364L1490 334 M1432 382L1490 352 M1432 400L1490 370 M1500 330L1530 290 M1508 330L1538 290 M1516 330L1546 290 M1524 330L1554 290 M1532 330L1562 290 M1540 330L1570 290 M1505 197L1470 240L1488 300L1495 330L1520 350L1575 372 M1490 260L1575 230M1480 290L1575 262M1470 330L1575 300M1460 370L1560 345 M1500 210L1575 197M1510 225L1575 205M1520 240L1575 215 M1420 400L1500 372M1430 410L1520 380M1540 400L1575 360M1545 420L1575 390M1550 440L1575 410 M1345 200L1395 230M1340 260L1390 285M1350 300L1380 330M1340 330L1375 360" stroke="#D8D8DA" stroke-width="1.5" fill="none"/>
<path d="M985 266 C997.5 266.0 1042.2 267.7 1060 266 C1077.8 264.3 1072.7 257.5 1092 256 C1111.3 254.5 1162.0 256.8 1176 257" stroke="#E2D3A6" stroke-width="4.2" fill="none" stroke-linejoin="round" stroke-linecap="round"/>
<path d="M985 266 C997.5 266.0 1042.2 267.7 1060 266 C1077.8 264.3 1072.7 257.5 1092 256 C1111.3 254.5 1162.0 256.8 1176 257" stroke="#F7F0D6" stroke-width="2.2" fill="none" stroke-linejoin="round" stroke-linecap="round"/>
<path d="M1242 197 C1242.7 199.5 1246.3 206.2 1246 212 C1245.7 217.8 1241.5 225.7 1240 232 C1238.5 238.3 1237.5 190.0 1237 250 C1236.5 310.0 1237.0 535.0 1237 592" stroke="#E2D3A6" stroke-width="4.2" fill="none" stroke-linejoin="round" stroke-linecap="round"/>
<path d="M1242 197 C1242.7 199.5 1246.3 206.2 1246 212 C1245.7 217.8 1241.5 225.7 1240 232 C1238.5 238.3 1237.5 190.0 1237 250 C1236.5 310.0 1237.0 535.0 1237 592" stroke="#F7F0D6" stroke-width="2.2" fill="none" stroke-linejoin="round" stroke-linecap="round"/>
<path d="M1295 197 C1300.0 205.2 1318.8 224.7 1325 246 C1331.2 267.3 1331.2 299.3 1332 325 C1332.8 350.7 1330.7 370.0 1330 400 C1329.3 430.0 1329.3 485.0 1328 505 C1326.7 525.0 1326.7 513.3 1322 520 C1317.3 526.7 1309.0 533.0 1300 545 C1291.0 557.0 1273.3 584.2 1268 592" stroke="#E2D3A6" stroke-width="4.2" fill="none" stroke-linejoin="round" stroke-linecap="round"/>
<path d="M1295 197 C1300.0 205.2 1318.8 224.7 1325 246 C1331.2 267.3 1331.2 299.3 1332 325 C1332.8 350.7 1330.7 370.0 1330 400 C1329.3 430.0 1329.3 485.0 1328 505 C1326.7 525.0 1326.7 513.3 1322 520 C1317.3 526.7 1309.0 533.0 1300 545 C1291.0 557.0 1273.3 584.2 1268 592" stroke="#F7F0D6" stroke-width="2.2" fill="none" stroke-linejoin="round" stroke-linecap="round"/>
<path d="M958 544 L1340 547" stroke="#E2D3A6" stroke-width="4.2" fill="none" stroke-linejoin="round" stroke-linecap="round"/>
<path d="M958 544 L1340 547" stroke="#F7F0D6" stroke-width="2.2" fill="none" stroke-linejoin="round" stroke-linecap="round"/>
<path d="M1183 584 L1300 584" stroke="#E2D3A6" stroke-width="4.2" fill="none" stroke-linejoin="round" stroke-linecap="round"/>
<path d="M1183 584 L1300 584" stroke="#F7F0D6" stroke-width="2.2" fill="none" stroke-linejoin="round" stroke-linecap="round"/>
<path d="M1184 418 L1330 420" stroke="#E2D3A6" stroke-width="4.2" fill="none" stroke-linejoin="round" stroke-linecap="round"/>
<path d="M1184 418 L1330 420" stroke="#F7F0D6" stroke-width="2.2" fill="none" stroke-linejoin="round" stroke-linecap="round"/>
<path d="M783 197 C783.2 199.8 781.5 209.3 784 214 C786.5 218.7 789.5 224.3 798 225 C806.5 225.7 825.7 218.8 835 218 C844.3 217.2 849.0 217.2 854 220 C859.0 222.8 862.2 224.5 865 235 C867.8 245.5 869.0 271.5 871 283 C873.0 294.5 877.7 295.2 877 304 C876.3 312.8 868.0 326.0 867 336 C866.0 346.0 868.8 353.3 871 364 C873.2 374.7 875.7 391.0 880 400 C884.3 409.0 894.2 415.0 897 418" stroke="#E2D3A6" stroke-width="4.2" fill="none" stroke-linejoin="round" stroke-linecap="round"/>
<path d="M783 197 C783.2 199.8 781.5 209.3 784 214 C786.5 218.7 789.5 224.3 798 225 C806.5 225.7 825.7 218.8 835 218 C844.3 217.2 849.0 217.2 854 220 C859.0 222.8 862.2 224.5 865 235 C867.8 245.5 869.0 271.5 871 283 C873.0 294.5 877.7 295.2 877 304 C876.3 312.8 868.0 326.0 867 336 C866.0 346.0 868.8 353.3 871 364 C873.2 374.7 875.7 391.0 880 400 C884.3 409.0 894.2 415.0 897 418" stroke="#F7F0D6" stroke-width="2.2" fill="none" stroke-linejoin="round" stroke-linecap="round"/>
<path d="M798 225 C798.8 228.5 798.0 238.5 803 246 C808.0 253.5 823.8 264.3 828 270 C832.2 275.7 832.2 276.5 828 280 C823.8 283.5 804.7 286.0 803 291 C801.3 296.0 816.7 303.5 818 310 C819.3 316.5 815.7 324.5 811 330 C806.3 335.5 794.2 336.7 790 343 C785.8 349.3 791.0 360.5 786 368 C781.0 375.5 768.8 381.7 760 388 C751.2 394.3 742.5 400.5 733 406 C723.5 411.5 712.3 419.5 703 421 C693.7 422.5 683.2 414.5 677 415 C670.8 415.5 667.5 421.5 666 424 C664.5 426.5 666.5 427.5 668 430 C669.5 432.5 671.3 435.7 675 439 C678.7 442.3 687.0 444.7 690 450 C693.0 455.3 690.3 464.5 693 471 C695.7 477.5 701.5 484.5 706 489 C710.5 493.5 714.7 498.0 720 498 C725.3 498.0 732.3 492.3 738 489 C743.7 485.7 750.8 478.8 754 478 C757.2 477.2 760.3 480.3 757 484 C753.7 487.7 738.2 496.2 734 500 C729.8 503.8 728.3 507.7 732 507 C735.7 506.3 751.5 496.7 756 496 C760.5 495.3 762.7 498.8 759 503 C755.3 507.2 745.0 516.5 734 521 C723.0 525.5 703.7 530.0 693 530 C682.3 530.0 675.3 524.8 670 521 C664.7 517.2 662.5 509.3 661 507" stroke="#E2D3A6" stroke-width="4.2" fill="none" stroke-linejoin="round" stroke-linecap="round"/>
<path d="M798 225 C798.8 228.5 798.0 238.5 803 246 C808.0 253.5 823.8 264.3 828 270 C832.2 275.7 832.2 276.5 828 280 C823.8 283.5 804.7 286.0 803 291 C801.3 296.0 816.7 303.5 818 310 C819.3 316.5 815.7 324.5 811 330 C806.3 335.5 794.2 336.7 790 343 C785.8 349.3 791.0 360.5 786 368 C781.0 375.5 768.8 381.7 760 388 C751.2 394.3 742.5 400.5 733 406 C723.5 411.5 712.3 419.5 703 421 C693.7 422.5 683.2 414.5 677 415 C670.8 415.5 667.5 421.5 666 424 C664.5 426.5 666.5 427.5 668 430 C669.5 432.5 671.3 435.7 675 439 C678.7 442.3 687.0 444.7 690 450 C693.0 455.3 690.3 464.5 693 471 C695.7 477.5 701.5 484.5 706 489 C710.5 493.5 714.7 498.0 720 498 C725.3 498.0 732.3 492.3 738 489 C743.7 485.7 750.8 478.8 754 478 C757.2 477.2 760.3 480.3 757 484 C753.7 487.7 738.2 496.2 734 500 C729.8 503.8 728.3 507.7 732 507 C735.7 506.3 751.5 496.7 756 496 C760.5 495.3 762.7 498.8 759 503 C755.3 507.2 745.0 516.5 734 521 C723.0 525.5 703.7 530.0 693 530 C682.3 530.0 675.3 524.8 670 521 C664.7 517.2 662.5 509.3 661 507" stroke="#F7F0D6" stroke-width="2.2" fill="none" stroke-linejoin="round" stroke-linecap="round"/>
<path d="M1171 197 C1172.5 207.0 1177.7 245.3 1180 257 C1182.3 268.7 1184.2 265.3 1185 267" stroke="#E2D3A6" stroke-width="4.2" fill="none" stroke-linejoin="round" stroke-linecap="round"/>
<path d="M1171 197 C1172.5 207.0 1177.7 245.3 1180 257 C1182.3 268.7 1184.2 265.3 1185 267" stroke="#F7F0D6" stroke-width="2.2" fill="none" stroke-linejoin="round" stroke-linecap="round"/>
<path d="M277 370 C283.8 367.8 304.0 359.7 318 357 C332.0 354.3 348.0 353.3 361 354 C374.0 354.7 386.5 358.0 396 361 C405.5 364.0 410.8 365.8 418 372 C425.2 378.2 431.8 389.3 439 398 C446.2 406.7 450.8 416.2 461 424 C471.2 431.8 487.8 440.0 500 445 C512.2 450.0 524.0 449.7 534 454 C544.0 458.3 551.3 466.0 560 471 C568.7 476.0 575.8 480.3 586 484 C596.2 487.7 610.2 489.3 621 493 C631.8 496.7 642.3 500.3 651 506 C659.7 511.7 666.5 522.0 673 527 C679.5 532.0 677.0 534.5 690 536 C703.0 537.5 730.8 534.5 751 536 C771.2 537.5 793.7 540.7 811 545 C828.3 549.3 842.0 556.3 855 562 C868.0 567.7 877.3 574.0 889 579 C900.7 584.0 919.0 589.8 925 592" stroke="#E5B861" stroke-width="5.5" fill="none" stroke-linejoin="round" stroke-linecap="round"/>
<path d="M277 370 C283.8 367.8 304.0 359.7 318 357 C332.0 354.3 348.0 353.3 361 354 C374.0 354.7 386.5 358.0 396 361 C405.5 364.0 410.8 365.8 418 372 C425.2 378.2 431.8 389.3 439 398 C446.2 406.7 450.8 416.2 461 424 C471.2 431.8 487.8 440.0 500 445 C512.2 450.0 524.0 449.7 534 454 C544.0 458.3 551.3 466.0 560 471 C568.7 476.0 575.8 480.3 586 484 C596.2 487.7 610.2 489.3 621 493 C631.8 496.7 642.3 500.3 651 506 C659.7 511.7 666.5 522.0 673 527 C679.5 532.0 677.0 534.5 690 536 C703.0 537.5 730.8 534.5 751 536 C771.2 537.5 793.7 540.7 811 545 C828.3 549.3 842.0 556.3 855 562 C868.0 567.7 877.3 574.0 889 579 C900.7 584.0 919.0 589.8 925 592" stroke="#F7D68A" stroke-width="3.2" fill="none" stroke-linejoin="round" stroke-linecap="round"/>
<path d="M990 197 C989.5 200.5 988.0 207.3 987 218 C986.0 228.7 984.7 246.7 984 261 C983.3 275.3 984.0 292.2 983 304 C982.0 315.8 980.2 324.2 978 332 C975.8 339.8 973.5 345.0 970 351 C966.5 357.0 962.7 363.3 957 368 C951.3 372.7 943.2 375.3 936 379 C928.8 382.7 919.7 385.7 914 390 C908.3 394.3 904.5 400.0 902 405 C899.5 410.0 899.0 414.2 899 420 C899.0 425.8 900.2 433.0 902 440 C903.8 447.0 906.2 453.3 910 462 C913.8 470.7 918.8 483.3 925 492 C931.2 500.7 941.0 507.2 947 514 C953.0 520.8 957.8 526.0 961 533 C964.2 540.0 965.7 546.2 966 556 C966.3 565.8 963.5 586.0 963 592" stroke="#E5B861" stroke-width="5.5" fill="none" stroke-linejoin="round" stroke-linecap="round"/>
<path d="M990 197 C989.5 200.5 988.0 207.3 987 218 C986.0 228.7 984.7 246.7 984 261 C983.3 275.3 984.0 292.2 983 304 C982.0 315.8 980.2 324.2 978 332 C975.8 339.8 973.5 345.0 970 351 C966.5 357.0 962.7 363.3 957 368 C951.3 372.7 943.2 375.3 936 379 C928.8 382.7 919.7 385.7 914 390 C908.3 394.3 904.5 400.0 902 405 C899.5 410.0 899.0 414.2 899 420 C899.0 425.8 900.2 433.0 902 440 C903.8 447.0 906.2 453.3 910 462 C913.8 470.7 918.8 483.3 925 492 C931.2 500.7 941.0 507.2 947 514 C953.0 520.8 957.8 526.0 961 533 C964.2 540.0 965.7 546.2 966 556 C966.3 565.8 963.5 586.0 963 592" stroke="#F7D68A" stroke-width="3.2" fill="none" stroke-linejoin="round" stroke-linecap="round"/>
<path d="M984 332 L984 418" stroke="#E5B861" stroke-width="5.5" fill="none" stroke-linejoin="round" stroke-linecap="round"/>
<path d="M984 332 L984 418" stroke="#F7D68A" stroke-width="3.2" fill="none" stroke-linejoin="round" stroke-linecap="round"/>
<path d="M899 418 L1184 418" stroke="#E5B861" stroke-width="5.5" fill="none" stroke-linejoin="round" stroke-linecap="round"/>
<path d="M899 418 L1184 418" stroke="#F7D68A" stroke-width="3.2" fill="none" stroke-linejoin="round" stroke-linecap="round"/>
<path d="M1185 267 L1185 592" stroke="#E5B861" stroke-width="5.5" fill="none" stroke-linejoin="round" stroke-linecap="round"/>
<path d="M1185 267 L1185 592" stroke="#F7D68A" stroke-width="3.2" fill="none" stroke-linejoin="round" stroke-linecap="round"/>
<path d="M1185 267 C1186.2 266.2 1189.7 263.5 1192 262 C1194.3 260.5 1197.8 258.7 1199 258" stroke="#E5B861" stroke-width="5.5" fill="none" stroke-linejoin="round" stroke-linecap="round"/>
<path d="M1185 267 C1186.2 266.2 1189.7 263.5 1192 262 C1194.3 260.5 1197.8 258.7 1199 258" stroke="#F7D68A" stroke-width="3.2" fill="none" stroke-linejoin="round" stroke-linecap="round"/>
<path d="M1205 197 C1205.3 201.7 1202.7 217.2 1207 225 C1211.3 232.8 1219.8 241.5 1231 244 C1242.2 246.5 1259.7 243.2 1274 240 C1288.3 236.8 1302.7 229.3 1317 225 C1331.3 220.7 1346.2 215.5 1360 214 C1373.8 212.5 1386.7 213.0 1400 216 C1413.3 219.0 1426.7 228.0 1440 232 C1453.3 236.0 1467.5 238.7 1480 240 C1492.5 241.3 1504.2 242.0 1515 240 C1525.8 238.0 1535.0 232.5 1545 228 C1555.0 223.5 1570.0 215.5 1575 213" stroke="#9A6BC6" stroke-width="6.5" fill="none" stroke-linejoin="round" stroke-linecap="round"/>
<path d="M1205 197 C1205.3 201.7 1202.7 217.2 1207 225 C1211.3 232.8 1219.8 241.5 1231 244 C1242.2 246.5 1259.7 243.2 1274 240 C1288.3 236.8 1302.7 229.3 1317 225 C1331.3 220.7 1346.2 215.5 1360 214 C1373.8 212.5 1386.7 213.0 1400 216 C1413.3 219.0 1426.7 228.0 1440 232 C1453.3 236.0 1467.5 238.7 1480 240 C1492.5 241.3 1504.2 242.0 1515 240 C1525.8 238.0 1535.0 232.5 1545 228 C1555.0 223.5 1570.0 215.5 1575 213" stroke="#B88BE2" stroke-width="4" fill="none" stroke-linejoin="round" stroke-linecap="round"/>
<path d="M1199 197 C1199.3 204.2 1201.0 230.3 1201 240 C1201.0 249.7 1200.8 251.2 1199 255 C1197.2 258.8 1191.5 261.7 1190 263" stroke="#9A6BC6" stroke-width="6.5" fill="none" stroke-linejoin="round" stroke-linecap="round"/>
<path d="M1199 197 C1199.3 204.2 1201.0 230.3 1201 240 C1201.0 249.7 1200.8 251.2 1199 255 C1197.2 258.8 1191.5 261.7 1190 263" stroke="#B88BE2" stroke-width="4" fill="none" stroke-linejoin="round" stroke-linecap="round"/>
<path d="M1210 215L1235 236L1300 236" stroke="#C9B0E0" stroke-width="2" fill="none"/>
<rect x="1174" y="284" width="21" height="15" rx="3" fill="#fff" stroke="#555" stroke-width="1"/><text x="1184.5" y="295" font-size="10" font-weight="bold" text-anchor="middle" fill="#222" font-family="Liberation Sans">110</text>
<rect x="1438" y="225" width="22" height="15" rx="3" fill="#fff" stroke="#555" stroke-width="1"/><text x="1449.0" y="236" font-size="10" font-weight="bold" text-anchor="middle" fill="#222" font-family="Liberation Sans">47</text>
<rect x="979" y="190" width="21" height="15" rx="3" fill="#fff" stroke="#555" stroke-width="1"/><text x="989.5" y="201" font-size="10" font-weight="bold" text-anchor="middle" fill="#222" font-family="Liberation Sans">213</text>
<text x="372" y="240" font-size="10.5" fill="#3C3C3C" text-anchor="start" font-family="Liberation Sans" transform="rotate(35 372 240)" >Burma Rd</text>
<text x="546" y="290" font-size="10.5" fill="#3C3C3C" text-anchor="start" font-family="Liberation Sans" transform="rotate(-58 546 290)" >Southfield Dr</text>
<text x="670" y="253" font-size="10.5" fill="#3C3C3C" text-anchor="start" font-family="Liberation Sans" >Crest Rd</text>
<text x="773" y="237" font-size="12" fill="#555" text-anchor="start" font-family="Liberation Sans" >Miraleste</text>
<text x="865" y="228" font-size="10.5" fill="#3C3C3C" text-anchor="start" font-family="Liberation Sans" transform="rotate(78 865 228)" >Miraleste Dr</text>
<text x="993" y="245" font-size="12" fill="#4E8A55" text-anchor="start" font-family="Liberation Sans" >Peck Park</text>
<text x="984" y="266" font-size="10.5" fill="#3C3C3C" text-anchor="start" font-family="Liberation Sans" transform="rotate(3 984 266)" >W Summerland Ave</text>
<text x="1110" y="300" font-size="10.5" fill="#3C3C3C" text-anchor="start" font-family="Liberation Sans" transform="rotate(-90 1110 300)" >N Bandini St</text>
<text x="1187" y="245" font-size="10.5" fill="#3C3C3C" text-anchor="start" font-family="Liberation Sans" transform="rotate(-90 1187 245)" >N Gaffey Pl</text>
<text x="1240" y="310" font-size="10.5" fill="#3C3C3C" text-anchor="start" font-family="Liberation Sans" transform="rotate(-90 1240 310)" >N Pacific Ave</text>
<text x="1327" y="250" font-size="10.5" fill="#3C3C3C" text-anchor="start" font-family="Liberation Sans" transform="rotate(84 1327 250)" >N Harbor Blvd</text>
<text x="1512" y="232" font-size="12" fill="#7A6654" text-anchor="start" font-family="Liberation Sans" font-style="italic">Terminal Isl</text>
<text x="1497" y="262" font-size="10.5" fill="#7A6654" text-anchor="start" font-family="Liberation Sans" >Port of Los Angel</text>
<text x="950" y="306" font-size="10.5" fill="#3C3C3C" text-anchor="start" font-family="Liberation Sans" transform="rotate(18 950 306)" >W 1st St</text>
<text x="1265" y="318" font-size="10.5" fill="#3C3C3C" text-anchor="start" font-family="Liberation Sans" >W 1st St</text>
<text x="1528" y="352" font-size="10.5" fill="#7A6654" text-anchor="start" font-family="Liberation Sans" >BNSF-Port</text>
<text x="1013" y="344" font-size="10.5" fill="#3C3C3C" text-anchor="start" font-family="Liberation Sans" >W 3rd St</text>
<text x="1027" y="357" font-size="11" fill="#8A7262" text-anchor="middle" font-family="Liberation Sans" >Providence</text>
<text x="1027" y="369" font-size="11" fill="#8A7262" text-anchor="middle" font-family="Liberation Sans" >Lit'l Co</text>
<text x="1027" y="381" font-size="11" fill="#8A7262" text-anchor="middle" font-family="Liberation Sans" >Mary</text>
<text x="1027" y="393" font-size="11" fill="#8A7262" text-anchor="middle" font-family="Liberation Sans" >Medical</text>
<text x="1027" y="405" font-size="11" fill="#8A7262" text-anchor="middle" font-family="Liberation Sans" >Center</text>
<text x="1093" y="348" font-size="10" fill="#7A6654" text-anchor="start" font-family="Liberation Sans" font-variant="small-caps" letter-spacing="0.5" style="font-variant:small-caps;font-weight:normal" stroke="#7A6654" stroke-width="0.25">San Pedro</text>
<text x="1190" y="375" font-size="10.5" fill="#3C3C3C" text-anchor="start" font-family="Liberation Sans" transform="rotate(-90 1190 375)" >S Gaffey St</text>
<text x="1163" y="383" font-size="10" fill="#7A6654" text-anchor="start" font-family="Liberation Sans" font-variant="small-caps" letter-spacing="0.5" style="font-variant:small-caps;font-weight:normal" stroke="#7A6654" stroke-width="0.25">Central San Pedro</text>
<text x="1060" y="381" font-size="10.5" fill="#3C3C3C" text-anchor="start" font-family="Liberation Sans" >W 6th St</text>
<text x="1455" y="360" font-size="10.5" fill="#3C3C3C" text-anchor="start" font-family="Liberation Sans" transform="rotate(70 1455 360)" >Tuna St</text>
<text x="315" y="339" font-size="10" fill="#7A6654" text-anchor="start" font-family="Liberation Sans" font-variant="small-caps" letter-spacing="0.5" style="font-variant:small-caps;font-weight:normal" stroke="#7A6654" stroke-width="0.25">Portuguese Bend</text>
<text x="742" y="349" font-size="10" fill="#7A6654" text-anchor="start" font-family="Liberation Sans" font-variant="small-caps" letter-spacing="0.5" style="font-variant:small-caps;font-weight:normal" stroke="#7A6654" stroke-width="0.25">San Pedro Hill</text>
<text x="900" y="362" font-size="10.5" fill="#3C3C3C" text-anchor="start" font-family="Liberation Sans" transform="rotate(15 900 362)" >El Rey Rd</text>
<text x="277" y="377" font-size="12" fill="#3C3C3C" text-anchor="start" font-family="Liberation Sans" transform="rotate(-15 277 377)" >Palos Verdes Dr S</text>
<text x="463" y="390" font-size="10.5" fill="#3C3C3C" text-anchor="start" font-family="Liberation Sans" transform="rotate(25 463 390)" >Dauntless Dr</text>
<text x="600" y="397" font-size="10.5" fill="#3C3C3C" text-anchor="start" font-family="Liberation Sans" transform="rotate(40 600 397)" >Hightide Dr</text>
<text x="734" y="406" font-size="10" fill="#7A6654" text-anchor="middle" font-family="Liberation Sans" font-variant="small-caps" letter-spacing="0.5" style="font-variant:small-caps;font-weight:normal" stroke="#7A6654" stroke-width="0.25">East Rancho Palos</text>
<text x="734" y="416" font-size="10" fill="#7A6654" text-anchor="middle" font-family="Liberation Sans" font-variant="small-caps" letter-spacing="0.5" style="font-variant:small-caps;font-weight:normal" stroke="#7A6654" stroke-width="0.25">Verdes</text>
<text x="449" y="430" font-size="12" fill="#3C3C3C" text-anchor="start" font-family="Liberation Sans" transform="rotate(22 449 430)" >Palos Verdes Dr S</text>
<text x="673" y="437" font-size="10.5" fill="#3C3C3C" text-anchor="start" font-family="Liberation Sans" transform="rotate(55 673 437)" >Palos Verdes Dr E</text>
<text x="897" y="418" font-size="10.5" fill="#3C3C3C" text-anchor="start" font-family="Liberation Sans" transform="rotate(62 897 418)" >S Western Ave</text>
<text x="1109" y="421" font-size="12" fill="#3C3C3C" text-anchor="start" font-family="Liberation Sans" >W 9th St</text>
<text x="1084" y="466" font-size="10.5" fill="#3C3C3C" text-anchor="start" font-family="Liberation Sans" transform="rotate(-90 1084 466)" >S Leland St</text>
<text x="1248" y="433" font-size="10" fill="#7A6654" text-anchor="start" font-family="Liberation Sans" font-variant="small-caps" letter-spacing="0.5" style="font-variant:small-caps;font-weight:normal" stroke="#7A6654" stroke-width="0.25">Vinegar Hill</text>
<text x="1110" y="493" font-size="10.5" fill="#3C3C3C" text-anchor="start" font-family="Liberation Sans" transform="rotate(-90 1110 493)" >S Alma St</text>
<text x="1240" y="490" font-size="10.5" fill="#3C3C3C" text-anchor="start" font-family="Liberation Sans" transform="rotate(-90 1240 490)" >S Pacific Ave</text>
<text x="1278" y="471" font-size="10.5" fill="#3C3C3C" text-anchor="start" font-family="Liberation Sans" >W 13th St</text>
<text x="1355" y="435" font-size="10.5" fill="#3C3C3C" text-anchor="start" font-family="Liberation Sans" transform="rotate(70 1355 435)" >Nagoya Way</text>
<text x="1383" y="400" font-size="11" fill="#5A7AB0" text-anchor="start" font-family="Liberation Sans" transform="rotate(70 1383 400)" >Avalon-San Pedro Ferry</text>
<text x="1375" y="360" font-size="11" fill="#5A7AB0" text-anchor="start" font-family="Liberation Sans" transform="rotate(-70 1375 360)" >San Pedro-Two Harbors Ferry</text>
<text x="1538" y="402" font-size="10.5" fill="#3C3C3C" text-anchor="start" font-family="Liberation Sans" transform="rotate(90 1538 402)" >Earle St</text>
<text x="1334" y="390" font-size="10.5" fill="#3C3C3C" text-anchor="start" font-family="Liberation Sans" transform="rotate(-90 1334 390)" >S Harbor Blvd</text>
<text x="1463" y="527" font-size="10.5" fill="#3C3C3C" text-anchor="start" font-family="Liberation Sans" transform="rotate(-90 1463 527)" >S Seaside Ave</text>
<text x="582" y="504" font-size="11" fill="#5B6B5B" text-anchor="middle" font-family="Liberation Sans" >Trump Nat'l Golf</text>
<text x="582" y="516" font-size="11" fill="#5B6B5B" text-anchor="middle" font-family="Liberation Sans" >Club-Los Angelas</text>
<text x="636" y="526" font-size="10.5" fill="#3C3C3C" text-anchor="start" font-family="Liberation Sans" transform="rotate(28 636 526)" >La Rotonda Dr</text>
<text x="848" y="517" font-size="10.5" fill="#3C3C3C" text-anchor="start" font-family="Liberation Sans" transform="rotate(18 848 517)" >Palacios Dr</text>
<text x="758" y="540" font-size="12" fill="#3C3C3C" text-anchor="start" font-family="Liberation Sans" transform="rotate(6 758 540)" >W 25th St</text>
<text x="974" y="547" font-size="11.5" fill="#3C3C3C" text-anchor="start" font-family="Liberation Sans" >W 19th St</text>
<text x="1180" y="548" font-size="11.5" fill="#3C3C3C" text-anchor="start" font-family="Liberation Sans" >W 19th St</text>
<text x="1058" y="557" font-size="10.5" fill="#3C3C3C" text-anchor="start" font-family="Liberation Sans" transform="rotate(-90 1058 557)" >S Walker Ave</text>
<text x="1136" y="585" font-size="10.5" fill="#3C3C3C" text-anchor="start" font-family="Liberation Sans" transform="rotate(-90 1136 585)" >S Meyler St</text>
<text x="1187" y="535" font-size="10.5" fill="#3C3C3C" text-anchor="start" font-family="Liberation Sans" transform="rotate(-90 1187 535)" >S Gaffey St</text>
<text x="1276" y="560" font-size="10.5" fill="#3C3C3C" text-anchor="start" font-family="Liberation Sans" transform="rotate(-42 1276 560)" >S Crescent Ave</text>
<text x="1340" y="560" font-size="10.5" fill="#3C3C3C" text-anchor="start" font-family="Liberation Sans" transform="rotate(-15 1340 560)" >E 22nd St</text>
<text x="1484" y="513" font-size="12" fill="#5A7AB0" text-anchor="start" font-family="Liberation Sans" font-style="italic">Los Angeles Harb</text>
<text x="277" y="352" font-size="12" fill="#444" text-anchor="start" font-family="Liberation Sans" >ld</text>
<path d="M1365 236L1395 265L1370 320L1355 380L1362 440L1395 520L1420 592" stroke="#6E8CC0" stroke-width="1" stroke-dasharray="1.5 2" fill="none"/>
<path d="M1368 236L1400 265L1376 320L1361 380L1368 440L1401 520L1426 592" stroke="#6E8CC0" stroke-width="1" stroke-dasharray="1.5 2" fill="none"/>
<text x="1564" y="562" font-size="12" font-weight="bold" fill="#111" text-anchor="end" font-family="Liberation Serif">0.7 miles</text>
<rect x="1421.5" y="566.5" width="143" height="4" fill="#AAC5F0" stroke="#111" stroke-width="1.2"/>
<text x="1360" y="585" font-size="8" fill="#333" font-family="Liberation Serif" textLength="100">© 2014 Microsoft Corporation</text>
<text x="1470" y="585" font-size="8" fill="#333" font-family="Liberation Serif" textLength="58">© 2010 NAVTEQ</text>
<text x="1540" y="585" font-size="8" fill="#333" font-family="Liberation Serif">© AND</text>
<path d="M284 563l5 2v16l8-5-4-2-2-5 10 4v5l-12 7-5-3z" fill="#333" opacity="0.85"/>
<text x="307" y="583" font-size="18" fill="#333" font-family="Liberation Sans" opacity="0.9">bing</text>
<rect x="921.5" y="389.5" width="11" height="11" fill="#FFFF00" stroke="#000" stroke-width="1"/>
<rect x="917.5" y="409.5" width="11" height="11" fill="#22E27A" stroke="#000" stroke-width="1"/>
<rect x="952.5" y="404.5" width="11" height="11" fill="#22E27A" stroke="#000" stroke-width="1"/>
<rect x="977.5" y="414.5" width="11" height="11" fill="#22E27A" stroke="#000" stroke-width="1"/>
<rect x="1014.5" y="414.5" width="11" height="11" fill="#22E27A" stroke="#000" stroke-width="1"/>
<rect x="1045.5" y="414.5" width="11" height="11" fill="#22E27A" stroke="#000" stroke-width="1"/>
<rect x="1072.5" y="414.5" width="11" height="11" fill="#22E27A" stroke="#000" stroke-width="1"/>
<rect x="1109.5" y="414.5" width="11" height="11" fill="#22E27A" stroke="#000" stroke-width="1"/>
<rect x="1163.5" y="414.5" width="11" height="11" fill="#22E27A" stroke="#000" stroke-width="1"/>
<rect x="1178.5" y="410.5" width="11" height="11" fill="#22E27A" stroke="#000" stroke-width="1"/>
<rect x="933.5" y="389.5" width="115" height="52" fill="#fff" fill-opacity="0.78" stroke="#AAAAAA" stroke-width="1"/>
<text x="936" y="402" font-size="10.5" font-weight="bold" fill="#333" font-family="Liberation Sans">Hour: 11:35:22 PM</text>
<text x="936" y="414" font-size="10.5" font-weight="bold" fill="#333" font-family="Liberation Sans">Driver: Al B</text>
<text x="936" y="426" font-size="10.5" font-weight="bold" fill="#333" font-family="Liberation Sans">Vehicle: idrive Van SB</text>
<text x="936" y="438" font-size="10.5" font-weight="bold" fill="#333" font-family="Liberation Sans"> Speed: 11.97 (MPH)</text>
<path d="M277 197H671V224H307V332H277Z" fill="#355E96" fill-opacity="0.78"/>
<text x="365" y="215" font-size="11" font-weight="bold" fill="#fff" font-family="Liberation Sans">Road</text>
<path d="M376 222L380 218L384 222Z" fill="#C8D8F0"/>
<text x="417" y="215" font-size="11" fill="#fff" font-family="Liberation Sans">Aerial</text>
<text x="470" y="215" font-size="11" fill="#fff" font-family="Liberation Sans">Bird's eye</text>
<rect x="537" y="204" width="1" height="14" fill="#8FA8CC"/><rect x="586" y="204" width="1" height="14" fill="#8FA8CC"/>
<text x="544" y="215" font-size="11" font-weight="bold" fill="#A39A8C" font-family="Liberation Sans">Labels</text>
<path d="M558 222L561 219L564 222Z" fill="#A39A8C"/>
<text x="654" y="214" font-size="10" font-weight="bold" fill="#fff" font-family="Liberation Sans">&lt;&lt;</text>
<defs><linearGradient id="cg" x1="0" y1="0" x2="1" y2="1"><stop offset="0" stop-color="#2A5BA5"/><stop offset="0.5" stop-color="#2E64B0"/><stop offset="1" stop-color="#4A8ADA"/></linearGradient></defs>
<circle cx="317" cy="236.5" r="24.5" fill="#000" opacity="0.18"/>
<circle cx="316" cy="235" r="23.5" fill="#F4F4F4"/><circle cx="316" cy="235" r="21.5" fill="url(#cg)"/>
<path d="M316 217l-4.5 5h3v4h3v-4h3zM316 253l-4.5-5h3v-4h3v4h3zM298 235l5-4.5v3h4v3h-4v3zM334 235l-5-4.5v3h-4v3h4v3z" fill="#DCE6F4"/><path d="M296 240Q316 225 336 232" stroke="#5A8AD0" stroke-width="1" fill="none" opacity="0.5"/>
<circle cx="294" cy="283" r="5" fill="none" stroke="#fff" stroke-width="1.6"/><path d="M290 287l-4 4" stroke="#7AB0E8" stroke-width="2.2"/>
<path d="M291.5 283h5" stroke="#fff" stroke-width="1.6"/>
<path d="M294 280.5v5" stroke="#fff" stroke-width="1.6"/>
<circle cx="294" cy="311" r="5" fill="none" stroke="#fff" stroke-width="1.6"/><path d="M290 315l-4 4" stroke="#7AB0E8" stroke-width="2.2"/>
<path d="M291.5 311h5" stroke="#fff" stroke-width="1.6"/>
</svg><svg class="a" style="left:1561px;top:605px" width="10" height="8"><rect x="1" y="1" width="7.5" height="5.5" rx="1" fill="#F4F4F6" stroke="#6E6E78" stroke-width="2"/></svg>
<div class="a" style="left:357px;top:619px;width:217px;height:1px"></div>
<div class="a" style="left:357px;top:619px;width:1216px;height:271px;border:1px solid #ABADB5;background:#fff"></div>
<div class="a" style="left:276px;top:655px;width:82px;height:30px;border:1px solid #B4B6BE;background:linear-gradient(#E4E5E9,#D9DADF)"><span class="t" style="left:7px;top:8px;font-size:11px;color:#444">Speed graphic</span></div>
<div class="a" style="left:276px;top:686px;width:82px;height:30px;border:1px solid #B4B6BE;background:linear-gradient(#E4E5E9,#D9DADF)"><span class="t" style="left:7px;top:8px;font-size:11px;color:#444">Route report</span></div>
<div class="a" style="left:275px;top:622px;width:83px;height:33px;border:1px solid #B4B6BE;border-right:none;background:#fff"><span class="t" style="left:7px;top:9px;font-size:11px;color:#222">Time report</span></div>
<div class="a" style="left:365px;top:627px;width:1201px;height:255px;border:1px solid #A9A9B0;background:#fff"></div>
<div class="a" style="left:476px;top:638px;width:905px;height:233px;border:1px solid #A9A9B0;background:#fff"></div>
<div class="a" style="left:477px;top:684px;width:242px;height:141px;background:#007F00"></div>
<div class="a" style="left:719px;top:684px;width:84px;height:141px;background:#FF0000"></div>
<div class="a" style="left:803px;top:684px;width:418px;height:141px;background:#007F00"></div>
<div class="a" style="left:1221px;top:684px;width:85px;height:141px;background:#FF0000"></div>
<div class="a" style="left:635px;top:684px;width:1px;height:141px;background:#006E00"></div>
<div class="a" style="left:887px;top:684px;width:1px;height:141px;background:#006E00"></div>
<div class="a" style="left:971px;top:684px;width:1px;height:141px;background:#006E00"></div>
<div class="a" style="left:1054px;top:684px;width:1px;height:141px;background:#006E00"></div>
<div class="a" style="left:1138px;top:684px;width:1px;height:141px;background:#006E00"></div>
<div class="t" style="left:373px;top:747px;font-size:11px;color:#222">Journey / Idle time</div>
<div class="a" style="left:470px;top:754px;width:6px;height:1px;background:#888"></div>
<div class="a" style="left:551px;top:638px;width:1px;height:233px;background:#0000CC"></div>
<div class="t" style="left:552px;top:806px;font-size:11px;color:#0000CC;transform-origin:0 0;transform:translate(12px,0) rotate(90deg)">11:35:22 PM</div>
<div class="a" style="left:1391px;top:638px;width:163px;height:58px;border:1px solid #A9A9B0;background:#fff"></div>
<div class="a" style="left:1395px;top:642px;width:18px;height:14px;background:#007F00"></div>
<div class="t" style="left:1418px;top:643px;font-size:11px;color:#222">Journey time: 4 min (80%)</div>
<div class="a" style="left:1395px;top:660px;width:18px;height:14px;background:#FF0000"></div>
<div class="t" style="left:1418px;top:661px;font-size:11px;color:#222">Idle time: 1 min (20%)</div>
<div class="a" style="left:1395px;top:678px;width:18px;height:14px;background:#808080"></div>
<div class="t" style="left:1418px;top:679px;font-size:11px;color:#222">Parking time: 0 sec (0%)</div>
</body></html>
